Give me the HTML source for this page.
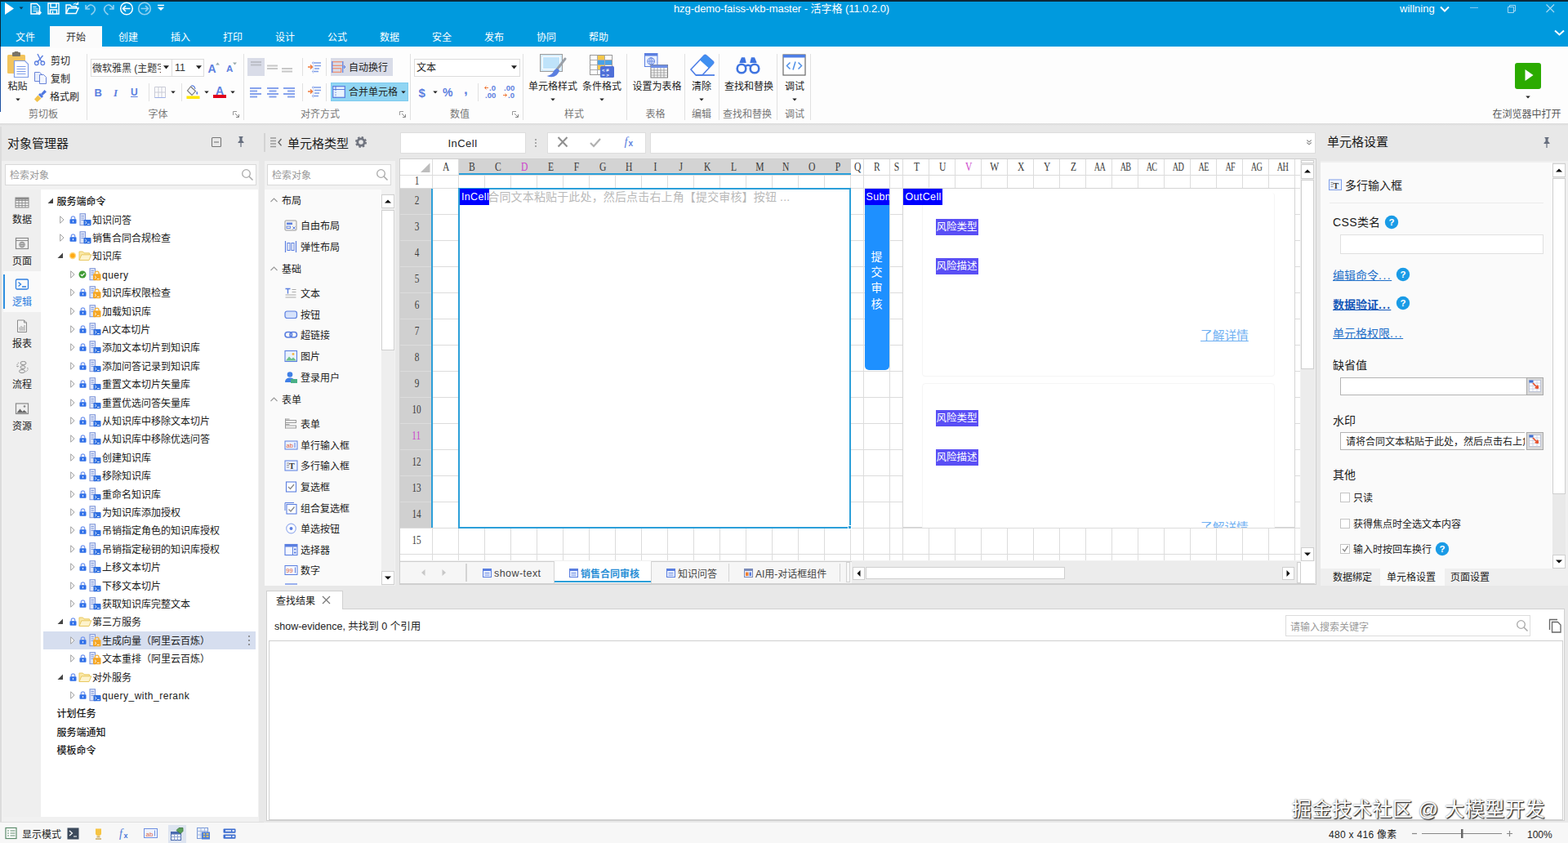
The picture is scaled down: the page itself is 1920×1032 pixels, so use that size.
<!DOCTYPE html><html lang="zh-CN"><head><meta charset="utf-8"><title>活字格</title><style>
*{box-sizing:border-box;margin:0;padding:0}
html,body{width:1920px;height:1032px;overflow:hidden;background:#e8e8e8}
body{font-family:"Liberation Sans","Noto Sans CJK SC",sans-serif;font-size:12px;color:#222;position:relative}
.a{position:absolute}
.t{position:absolute;white-space:nowrap;line-height:1}
.w{color:#fff}
svg{position:absolute;overflow:visible}
.hdr{font-size:15px;color:#1a1a1a}
.grp{font-size:12px;color:#777}
.rb{font-size:12px;color:#222}
.col{position:absolute;top:195px;height:19px;font-family:"Liberation Serif","Noto Serif CJK SC",serif;font-size:14.5px;color:#333;text-align:center;line-height:19px}
.row{position:absolute;left:490px;width:40px;font-family:"Liberation Serif","Noto Serif CJK SC",serif;font-size:14px;color:#333;text-align:center}
.nw{display:inline-block;transform:scaleX(.8)}
.nw2{display:inline-block;transform:scaleX(.7);letter-spacing:-1px}
.tr{position:absolute;left:52px;width:261px;height:22px}
.lk{color:#1b6fc2;text-decoration:underline}
</style></head><body>
<div class="a" style="left:0px;top:0px;width:1920px;height:57px;background:#009ade;"></div>
<div class="a" style="left:0px;top:0px;width:1920px;height:1.5px;background:#0c2838;"></div>
<div class="a" style="left:0px;top:0px;width:1px;height:57px;background:#0c2838;"></div>
<svg style="left:0px;top:0px" width="210" height="24" viewBox="0 0 210 24">
    <path d="M6 3 L17 10.5 L6 18 Z" fill="#fff"/>
    <path d="M23.5 8.5 h5 l-2.5 3 z" fill="#0a3a5a"/>
    <path d="M38 4.5 h7 l3.5 3.5 v9 h-10.5 z" stroke="#fff" fill="none" stroke-width="1.5"/><path d="M40.5 8.5h4M40.5 11h6M40.5 13.5h6" stroke="#fff" stroke-width="1.2"/><path d="M44 15.5h6M47.5 13l2.5 2.500l-2.500 2.500" stroke="#fff" fill="none" stroke-width="1.5"/>
    <path d="M59 4 h13 v13 h-13 z" stroke="#fff" fill="none" stroke-width="1.5"/><path d="M62 4 v5 h7 v-5 M61.500 17 v-5 h8 v5 M64.500 13.500v3" stroke="#fff" fill="none" stroke-width="1.5"/>
    <path d="M81 16.500 v-10.500 h5 l1.500 2 h6 v2" stroke="#fff" fill="none" stroke-width="1.5"/><path d="M81 16.500 l3 -6.500 h12 l-3 6.500 z" stroke="#fff" fill="none" stroke-width="1.5"/><path d="M90 5.500 q3 -3 5.500 0 M95.500 2.500 v3 h-3" stroke="#fff" fill="none" stroke-width="1.200"/>
    <path d="M105 6 l0 5 l5 0 M105.500 10.500 q5 -8 10 -2 q3 5 -4 9.500" stroke="#8fd0f0" fill="none" stroke-width="1.6"/>
    <path d="M139 6 l0 5 l-5 0 M138.500 10.500 q-5 -8 -10 -2 q-3 5 4 9.500" stroke="#8fd0f0" fill="none" stroke-width="1.6"/>
    <circle cx="155" cy="10.500" r="7.300" stroke="#fff" fill="none" stroke-width="1.5"/><path d="M159.500 10.500 h-9 M154 7 l-3.500 3.500 l3.500 3.500" stroke="#fff" fill="none" stroke-width="1.5"/>
    <circle cx="177" cy="10.500" r="7.300" stroke="#8fd0f0" fill="none" stroke-width="1.6"/><path d="M172.500 10.500 h9 M178 7 l3.500 3.500 l-3.500 3.500" stroke="#8fd0f0" fill="none" stroke-width="1.6"/>
    <path d="M193 6.500 h8" stroke="#fff" stroke-width="1.500"/><path d="M193 9 h8 l-4 4 z" fill="#fff"/>
    </svg>
<div class="t " style="left:757px;width:400px;text-align:center;top:3.0px;font-size:13px;height:15px;line-height:15px;color:#fff;letter-spacing:-0.05px">hzg-demo-faiss-vkb-master - 活字格 (11.0.2.0)</div>
<div class="t " style="left:1714px;top:3.0px;font-size:13px;height:15px;line-height:15px;color:#fff;">willning</div>
<svg style="left:1760px;top:0px" width="160" height="56" viewBox="0 0 160 56">
    <path d="M4 8.500 l5 5 l5 -5" stroke="#fff" stroke-width="2" fill="none"/>
    <path d="M40 9.500 h10" stroke="#7fc8ee" stroke-width="1"/>
    <path d="M86.500 8.500 h7 v7 h-7 z M88.500 8.500 v-2 h7 v7 h-2" stroke="#a6daf3" stroke-width="1" fill="none"/>
    <path d="M133.500 5.500 l9.500 9.500 M143 5.500 l-9.500 9.500" stroke="#a6daf3" stroke-width="1.200" fill="none"/>
    <path d="M144 37.500 l5.500 5 l5.500 -5" stroke="#fff" stroke-width="2" fill="none"/>
    </svg>
<div class="a" style="left:61px;top:32px;width:64px;height:26px;background:#fbfbfb;"></div>
<div class="t " style="left:-169px;width:400px;text-align:center;top:39.0px;font-size:12px;height:14px;line-height:14px;color:#fff;">文件</div>
<div class="t " style="left:-107px;width:400px;text-align:center;top:39.0px;font-size:12px;height:14px;line-height:14px;color:#333;">开始</div>
<div class="t " style="left:-43px;width:400px;text-align:center;top:39.0px;font-size:12px;height:14px;line-height:14px;color:#fff;">创建</div>
<div class="t " style="left:21px;width:400px;text-align:center;top:39.0px;font-size:12px;height:14px;line-height:14px;color:#fff;">插入</div>
<div class="t " style="left:85px;width:400px;text-align:center;top:39.0px;font-size:12px;height:14px;line-height:14px;color:#fff;">打印</div>
<div class="t " style="left:149px;width:400px;text-align:center;top:39.0px;font-size:12px;height:14px;line-height:14px;color:#fff;">设计</div>
<div class="t " style="left:213px;width:400px;text-align:center;top:39.0px;font-size:12px;height:14px;line-height:14px;color:#fff;">公式</div>
<div class="t " style="left:277px;width:400px;text-align:center;top:39.0px;font-size:12px;height:14px;line-height:14px;color:#fff;">数据</div>
<div class="t " style="left:341px;width:400px;text-align:center;top:39.0px;font-size:12px;height:14px;line-height:14px;color:#fff;">安全</div>
<div class="t " style="left:405px;width:400px;text-align:center;top:39.0px;font-size:12px;height:14px;line-height:14px;color:#fff;">发布</div>
<div class="t " style="left:469px;width:400px;text-align:center;top:39.0px;font-size:12px;height:14px;line-height:14px;color:#fff;">协同</div>
<div class="t " style="left:533px;width:400px;text-align:center;top:39.0px;font-size:12px;height:14px;line-height:14px;color:#fff;">帮助</div>
<div class="a" style="left:0px;top:57px;width:1920px;height:94px;background:#fdfdfd;"></div>
<div class="a" style="left:61px;top:57px;width:64px;height:2px;background:#fbfbfb;"></div>
<div class="a" style="left:0px;top:151px;width:1920px;height:3px;background:linear-gradient(#d9d9d9,#e8e8e8)"></div>
<div class="a" style="left:0px;top:57px;width:1px;height:80px;background:#1b4fa0;"></div>
<svg style="left:8px;top:63px" width="30" height="34" viewBox="0 0 30 34">
      <rect x="1" y="4" width="22" height="23" rx="1.500" fill="#f2c45c"/>
      <rect x="7" y="1" width="10" height="5" rx="1" fill="#7a7466"/><rect x="9.500" y="0" width="5" height="3" rx="1" fill="#7a7466"/>
      <path d="M9.500 11.500 h13 l4 4 v16 h-17 z" fill="#fff" stroke="#7f9ee8" stroke-width="1.200"/>
      <path d="M12.500 18.500h11M12.500 21.500h11M12.500 24.500h11M12.500 27.500h11" stroke="#7f9ee8" stroke-width="1.200"/></svg>
<div class="t " style="left:-178.5px;width:400px;text-align:center;top:99.0px;font-size:12px;height:14px;line-height:14px;color:#222;">粘贴</div>
<svg style="left:18.5px;top:119.5px" width="6" height="4" viewBox="0 0 6 4"><path d="M0.300 0.500 h5.400 l-2.700 3 z" fill="#222"/></svg>
<svg style="left:41px;top:65px" width="16" height="16" viewBox="0 0 16 16"><path d="M5 1 l5 10 M11.500 3 l-7 8.500" stroke="#5b7fe0" stroke-width="1.400" fill="none"/><circle cx="3.800" cy="12.300" r="2.300" stroke="#5b7fe0" stroke-width="1.300" fill="none"/><circle cx="11.300" cy="12.300" r="2.300" stroke="#5b7fe0" stroke-width="1.300" fill="none"/></svg>
<div class="t " style="left:62px;top:68.0px;font-size:12px;height:14px;line-height:14px;">剪切</div>
<svg style="left:41px;top:87px" width="17" height="17" viewBox="0 0 17 17"><path d="M1.500 1.500 h6 l2.500 2.500 v8.500 h-8.500 z" fill="#e8eefc" stroke="#6a85d8"/><path d="M7.500 4.500 h5 l3 3 v8 h-8 z" fill="#f3f6fe" stroke="#6a85d8"/></svg>
<div class="t " style="left:62px;top:90.0px;font-size:12px;height:14px;line-height:14px;">复制</div>
<svg style="left:41px;top:109px" width="17" height="17" viewBox="0 0 17 17"><path d="M9 6 l4.500 -5 l2.500 2.500 l-5 4.500 z" fill="#4f77e0"/><path d="M8 5 l4 4 l-2 2 l-4 -4 z" fill="#4f77e0"/><path d="M5.500 7.500 l4 4 l-5 4.500 l-3.500 -3.500 z" fill="#f2c24a"/></svg>
<div class="t " style="left:61px;top:112.0px;font-size:12px;height:14px;line-height:14px;">格式刷</div>
<div class="t " style="left:-147px;width:400px;text-align:center;top:132.5px;font-size:12px;height:14px;line-height:14px;color:#777;">剪切板</div>
<div class="a" style="left:106px;top:66px;width:1px;height:81px;background:#e1e1e1;"></div>
<div class="a" style="left:111px;top:71.5px;width:100px;height:22px;background:#fff;border:1px solid #dcdcdc;"></div>
<div class="a" style="left:210px;top:71.5px;width:40px;height:22px;background:#fff;border:1px solid #dcdcdc;"></div>
<div class="a" style="left:113px;top:74px;width:84px;height:18px;overflow:hidden"><div class="t " style="left:0px;top:3.0px;font-size:12px;height:14px;line-height:14px;color:#333;">微软雅黑 (主题字体)</div></div>
<svg style="left:200.0px;top:79.8px" width="7" height="4.5" viewBox="0 0 7 4.5"><path d="M0 0.200 h7 l-3.500 4.300 z" fill="#222"/></svg>
<div class="t " style="left:214px;top:75.8px;font-size:12.5px;height:14.5px;line-height:14.5px;color:#333;">11</div>
<svg style="left:239.5px;top:79.8px" width="7" height="4.5" viewBox="0 0 7 4.5"><path d="M0 0.200 h7 l-3.500 4.300 z" fill="#222"/></svg>
<div class="t " style="left:254.5px;top:76.0px;font-size:14px;height:16px;line-height:16px;color:#5b7fe0;font-weight:bold">A</div>
<svg style="left:264px;top:76px" width="5" height="4" viewBox="0 0 5 4"><path d="M0 3.500 l2.500 -3 l2.500 3 z" fill="#9aa"/></svg>
<div class="t " style="left:277px;top:78.2px;font-size:11.5px;height:13.5px;line-height:13.5px;color:#5b7fe0;font-weight:bold">A</div>
<svg style="left:285px;top:76px" width="5" height="4" viewBox="0 0 5 4"><path d="M0 0.500 l2.500 3 l2.500 -3 z" fill="#9aa"/></svg>
<div class="t " style="left:115.5px;top:105.5px;font-size:13px;height:15px;line-height:15px;color:#5b7fe0;font-weight:bold">B</div>
<div class="t " style="left:139px;top:105.5px;font-size:13px;height:15px;line-height:15px;color:#5b7fe0;font-weight:bold;font-style:italic;font-family:'Liberation Serif',serif">I</div>
<div class="t " style="left:160px;top:105.5px;font-size:12px;height:14px;line-height:14px;color:#5b7fe0;font-weight:bold;text-decoration:underline">U</div>
<div class="a" style="left:182px;top:102px;width:1px;height:22px;background:#e1e1e1;"></div>
<svg style="left:189px;top:106px" width="14" height="14" viewBox="0 0 14 14"><path d="M0.500 0.500 h13 v13 h-13 z M5 0.500 v13 M9 0.500 v13 M0.500 7 h13" stroke="#c9cbd6" fill="none"/><path d="M0.500 13.500 h13" stroke="#9db0ea"/></svg>
<svg style="left:209px;top:110.5px" width="6" height="4" viewBox="0 0 6 4"><path d="M0.300 0.500 h5.400 l-2.700 3 z" fill="#222"/></svg>
<div class="a" style="left:222px;top:102px;width:1px;height:22px;background:#e1e1e1;"></div>
<svg style="left:228px;top:104px" width="18" height="18" viewBox="0 0 18 18"><path d="M5.500 2 l6 5.500 l-4.500 5 l-5.500 -5.500 z" fill="#f4f6fb" stroke="#777" stroke-width="1.100"/><path d="M6 1 q4 -1 5 4" stroke="#5b7fe0" fill="none" stroke-width="1.200"/><path d="M13 7.500 q2.500 3 0 4.500 q-1.500 -2 0 -4.500z" fill="#5b7fe0"/><rect x="0.500" y="13.500" width="16" height="3.500" fill="#ffe600"/></svg>
<svg style="left:250px;top:110.5px" width="6" height="4" viewBox="0 0 6 4"><path d="M0.300 0.500 h5.400 l-2.700 3 z" fill="#222"/></svg>
<div class="t " style="left:264px;top:103.0px;font-size:14px;height:16px;line-height:16px;color:#5b7fe0;font-weight:bold">A</div>
<div class="a" style="left:261px;top:116px;width:16px;height:4px;background:#e0001b;"></div>
<svg style="left:282px;top:110.5px" width="6" height="4" viewBox="0 0 6 4"><path d="M0.300 0.500 h5.400 l-2.700 3 z" fill="#222"/></svg>
<div class="t " style="left:-6.5px;width:400px;text-align:center;top:132.5px;font-size:12px;height:14px;line-height:14px;color:#777;">字体</div>
<svg style="left:285px;top:135.5px" width="8" height="8" viewBox="0 0 8 8"><path d="M0.500 5 v-4.500 h4.500" stroke="#999" fill="none"/><path d="M3 3 l4 4 M7.500 4 v3.500 h-3.500" stroke="#888" fill="none"/></svg>
<div class="a" style="left:298px;top:66px;width:1px;height:81px;background:#e1e1e1;"></div>
<div class="a" style="left:303px;top:71px;width:21px;height:22px;background:#d9dce8;"></div>
<svg style="left:303px;top:71px" width="60" height="22" viewBox="0 0 60 22"><path d="M4 5 h13 M4 8.500 h13" stroke="#bbbdc6" stroke-width="2"/><path d="M24 9.500 h13 M24 13 h13" stroke="#c8c8c8" stroke-width="2"/><path d="M42 13 h13 M42 16.500 h13" stroke="#c8c8c8" stroke-width="2"/></svg>
<svg style="left:305px;top:106px" width="60" height="16" viewBox="0 0 60 16"><path d="M1 2 h14 M1 5.500 h9 M1 9 h14 M1 12.500 h9" stroke="#86a2ec" stroke-width="2.100"/><path d="M22 2 h14 M24.500 5.500 h9 M22 9 h14 M24.500 12.500 h9" stroke="#86a2ec" stroke-width="2.100"/><path d="M42 2 h14 M47 5.500 h9 M42 9 h14 M47 12.500 h9" stroke="#86a2ec" stroke-width="2.100"/></svg>
<div class="a" style="left:370px;top:71px;width:1px;height:22px;background:#e1e1e1;"></div>
<div class="a" style="left:370px;top:102px;width:1px;height:22px;background:#e1e1e1;"></div>
<div class="a" style="left:399px;top:71px;width:1px;height:22px;background:#e1e1e1;"></div>
<div class="a" style="left:399px;top:102px;width:1px;height:22px;background:#e1e1e1;"></div>
<svg style="left:377px;top:75px" width="17" height="15" viewBox="0 0 17 15"><path d="M5 2 h11 M8 5.500 h8 M8 9 h6 M5 12.500 h8" stroke="#7f9ee8" stroke-width="1.700"/><path d="M0 7 h5 M3 4.500 l2.500 2.500 l-2.500 2.500" stroke="#f07a3a" stroke-width="1.400" fill="none"/><path d="M6.500 0 v15" stroke="#cdd6f5" stroke-width="1"/></svg>
<svg style="left:377px;top:105px" width="17" height="15" viewBox="0 0 17 15"><path d="M5 2 h11 M8 5.500 h8 M8 9 h6 M5 12.500 h8" stroke="#7f9ee8" stroke-width="1.700"/><path d="M0 7 h5 M3 4.500 l2.500 2.500 l-2.500 2.500" stroke="#f07a3a" stroke-width="1.400" fill="none"/><path d="M6.500 0 v15" stroke="#cdd6f5" stroke-width="1"/></svg>
<div class="a" style="left:405px;top:71px;width:76px;height:22px;background:#d9dce8;"></div>
<svg style="left:406px;top:75px" width="17" height="15" viewBox="0 0 17 15"><rect x="0.700" y="0.700" width="13" height="4.600" fill="none" stroke="#f08a6a" stroke-width="1.200"/><rect x="0.700" y="8.700" width="11" height="4.600" fill="none" stroke="#f08a6a" stroke-width="1.200"/><path d="M0.700 0 v14 M13.700 0 v14" stroke="#6f8fe6" stroke-width="1.400"/><path d="M13.500 7 h3 M15 5 l2 2 l-2 2" stroke="#5b7fe0" fill="none"/></svg>
<div class="t " style="left:427px;top:76.0px;font-size:12px;height:14px;line-height:14px;color:#222;">自动换行</div>
<div class="a" style="left:405px;top:101px;width:95px;height:23px;background:#90d5f3;border:1px solid #7ecbee;"></div>
<svg style="left:407px;top:105px" width="16" height="15" viewBox="0 0 16 15"><rect x="0.700" y="0.700" width="14.600" height="13.600" fill="#eaf4fd" stroke="#5b7fe0" stroke-width="1.300"/><path d="M0.700 4.500 h14.600 M4 0.700 v3.800" stroke="#5b7fe0" stroke-width="1.100"/><path d="M4 4.500 v10" stroke="#5b7fe0" stroke-width="1" stroke-dasharray="1.500 1.500"/></svg>
<div class="t " style="left:427px;top:105.5px;font-size:12px;height:14px;line-height:14px;color:#222;">合并单元格</div>
<svg style="left:491px;top:110.5px" width="6" height="4" viewBox="0 0 6 4"><path d="M0.300 0.500 h5.400 l-2.700 3 z" fill="#222"/></svg>
<div class="t " style="left:192px;width:400px;text-align:center;top:132.5px;font-size:12px;height:14px;line-height:14px;color:#777;">对齐方式</div>
<svg style="left:489px;top:135.5px" width="8" height="8" viewBox="0 0 8 8"><path d="M0.500 5 v-4.500 h4.500" stroke="#999" fill="none"/><path d="M3 3 l4 4 M7.500 4 v3.500 h-3.500" stroke="#888" fill="none"/></svg>
<div class="a" style="left:502px;top:66px;width:1px;height:81px;background:#e1e1e1;"></div>
<div class="a" style="left:507px;top:71.5px;width:130px;height:22px;background:#fff;border:1px solid #dcdcdc;"></div>
<div class="t " style="left:510px;top:76.0px;font-size:12px;height:14px;line-height:14px;color:#222;">文本</div>
<svg style="left:625.5px;top:79.8px" width="7" height="4.5" viewBox="0 0 7 4.5"><path d="M0 0.200 h7 l-3.500 4.300 z" fill="#222"/></svg>
<div class="t " style="left:512.5px;top:104.5px;font-size:15px;height:17px;line-height:17px;color:#5b7fe0;font-weight:bold">$</div>
<svg style="left:530px;top:110.5px" width="6" height="4" viewBox="0 0 6 4"><path d="M0.300 0.500 h5.400 l-2.700 3 z" fill="#222"/></svg>
<div class="t " style="left:542px;top:105.0px;font-size:14px;height:16px;line-height:16px;color:#5b7fe0;font-weight:bold">%</div>
<div class="t " style="left:568px;top:99.5px;font-size:17px;height:19px;line-height:19px;color:#5b7fe0;font-weight:bold">,</div>
<div class="a" style="left:585px;top:102px;width:1px;height:22px;background:#e1e1e1;"></div>
<svg style="left:593px;top:103px" width="40" height="20" viewBox="0 0 40 20"><text x="6" y="8" font-size="9.500" font-weight="bold" fill="#5b7fe0" font-family="Liberation Sans,sans-serif">.0</text><text x="1" y="17" font-size="9.500" font-weight="bold" fill="#5b7fe0" font-family="Liberation Sans,sans-serif">.00</text><path d="M5 4.500 h-4.500 M2.500 2.500 l-2 2 l2 2" stroke="#f07a3a" fill="none"/><text x="24" y="8" font-size="9.500" font-weight="bold" fill="#5b7fe0" font-family="Liberation Sans,sans-serif">.00</text><text x="29" y="17" font-size="9.500" font-weight="bold" fill="#5b7fe0" font-family="Liberation Sans,sans-serif">.0</text><path d="M23 13.500 h4.500 M25.500 11.500 l2 2 l-2 2" stroke="#f07a3a" fill="none"/></svg>
<div class="t " style="left:363px;width:400px;text-align:center;top:132.5px;font-size:12px;height:14px;line-height:14px;color:#777;">数值</div>
<svg style="left:627px;top:135.5px" width="8" height="8" viewBox="0 0 8 8"><path d="M0.500 5 v-4.500 h4.500" stroke="#999" fill="none"/><path d="M3 3 l4 4 M7.500 4 v3.500 h-3.500" stroke="#888" fill="none"/></svg>
<div class="a" style="left:640px;top:66px;width:1px;height:81px;background:#e1e1e1;"></div>
<svg style="left:659px;top:64px" width="38" height="36" viewBox="0 0 38 36"><rect x="2.500" y="2.500" width="27" height="21" fill="#d6ecfb" stroke="#9c9c9c" stroke-width="1"/><rect x="5.500" y="5.500" width="21" height="15" fill="#bfe3fa" stroke="#fff"/><path d="M33 8 l-10 13" stroke="#9aa0a8" stroke-width="3" stroke-linecap="round"/><path d="M23.500 20 q-3 0 -5 4 q-2 4 -8 5 q7 3 12 -1 q3 -3 3.500 -6 z" fill="#5b7fe0"/></svg>
<div class="t " style="left:477px;width:400px;text-align:center;top:99.0px;font-size:12px;height:14px;line-height:14px;color:#222;">单元格样式</div>
<svg style="left:674px;top:119.5px" width="6" height="4" viewBox="0 0 6 4"><path d="M0.300 0.500 h5.400 l-2.700 3 z" fill="#222"/></svg>
<svg style="left:720px;top:65px" width="34" height="34" viewBox="0 0 34 34"><rect x="2.500" y="2.500" width="27" height="24" fill="#fff" stroke="#999"/><path d="M2.500 8.500 h27 M2.500 14.500 h27 M2.500 20.500 h27 M11.500 2.500 v24 M20.500 2.500 v24" stroke="#aaa"/><rect x="12" y="3" width="8" height="5" fill="#f5c84a"/><rect x="12" y="9" width="8" height="5" fill="#4aa3e8"/><rect x="21" y="9" width="8" height="5" fill="#4aa3e8"/><rect x="12" y="15" width="8" height="5" fill="#f5c84a"/><rect x="15" y="16" width="17" height="14" rx="1.500" fill="#4f6fd8"/><text x="17" y="22.500" font-size="6" font-weight="bold" fill="#fff" font-family="Liberation Sans,sans-serif">&lt; ≠</text><text x="17" y="28.500" font-size="6" font-weight="bold" fill="#fff" font-family="Liberation Sans,sans-serif">= &gt;</text></svg>
<div class="t " style="left:537px;width:400px;text-align:center;top:99.0px;font-size:12px;height:14px;line-height:14px;color:#222;">条件格式</div>
<svg style="left:734px;top:119.5px" width="6" height="4" viewBox="0 0 6 4"><path d="M0.300 0.500 h5.400 l-2.700 3 z" fill="#222"/></svg>
<div class="t " style="left:503px;width:400px;text-align:center;top:132.5px;font-size:12px;height:14px;line-height:14px;color:#777;">样式</div>
<div class="a" style="left:767px;top:66px;width:1px;height:81px;background:#e1e1e1;"></div>
<svg style="left:787px;top:64px" width="34" height="34" viewBox="0 0 34 34"><rect x="2.500" y="1.500" width="15.500" height="16" fill="#eaf1ff" stroke="#5b7fe0"/><rect x="2.500" y="1.500" width="15.500" height="3" fill="#5b7fe0"/><circle cx="10.200" cy="11" r="4.300" fill="none" stroke="#5b7fe0"/><path d="M6 11 h8.500 M10.200 6.700 v8.600" stroke="#5b7fe0" stroke-width="0.800"/><ellipse cx="10.200" cy="11" rx="2" ry="4.300" fill="none" stroke="#5b7fe0" stroke-width="0.700"/><rect x="10" y="15.500" width="20.500" height="15.500" fill="#fff" stroke="#7a7a7a"/><rect x="10" y="15.500" width="20.500" height="3.500" fill="#6f8fe6"/><path d="M10 22 h20.500 M10 25 h20.500 M10 28 h20.500 M14 19 v12 M18 19 v12 M22 19 v12 M26 19 v12" stroke="#9a9a9a" stroke-width="0.900"/></svg>
<div class="t " style="left:604.5px;width:400px;text-align:center;top:99.0px;font-size:12px;height:14px;line-height:14px;color:#222;">设置为表格</div>
<div class="t " style="left:602.5px;width:400px;text-align:center;top:132.5px;font-size:12px;height:14px;line-height:14px;color:#777;">表格</div>
<div class="a" style="left:838px;top:66px;width:1px;height:81px;background:#e1e1e1;"></div>
<svg style="left:843px;top:65px" width="34" height="30" viewBox="0 0 34 30"><path d="M3 20 l16 -17 q1.500 -1.500 3 0 l8 7 q1.500 1.500 0 3 l-13 14 h-8 z" fill="#fff" stroke="#4f7fe6" stroke-width="1.600"/><path d="M14 8.500 l5 -5.500 q1.500 -1.500 3 0 l8 7 q1.500 1.500 0 3 l-5 5.500 z" fill="#3f8ff0"/><path d="M9 27 h23" stroke="#4f7fe6" stroke-width="1.800"/></svg>
<div class="t " style="left:659px;width:400px;text-align:center;top:99.0px;font-size:12px;height:14px;line-height:14px;color:#222;">清除</div>
<svg style="left:856px;top:119.5px" width="6" height="4" viewBox="0 0 6 4"><path d="M0.300 0.500 h5.400 l-2.700 3 z" fill="#222"/></svg>
<div class="t " style="left:659px;width:400px;text-align:center;top:132.5px;font-size:12px;height:14px;line-height:14px;color:#777;">编辑</div>
<div class="a" style="left:880px;top:66px;width:1px;height:81px;background:#e1e1e1;"></div>
<svg style="left:901px;top:68px" width="30" height="24" viewBox="0 0 30 24"><circle cx="7" cy="16" r="5.300" fill="#fff" stroke="#3f74e0" stroke-width="2.600"/><circle cx="23" cy="16" r="5.300" fill="#fff" stroke="#3f74e0" stroke-width="2.600"/><path d="M5 9 l2.500 -6 h3 l1.500 6 M25 9 l-2.500 -6 h-3 l-1.500 6" fill="#3f74e0" stroke="#3f74e0" stroke-width="1.500"/><path d="M12 13 q3 -2.500 6 0" stroke="#3f74e0" stroke-width="2.400" fill="none"/></svg>
<div class="t " style="left:717px;width:400px;text-align:center;top:99.0px;font-size:12px;height:14px;line-height:14px;color:#222;">查找和替换</div>
<div class="t " style="left:715px;width:400px;text-align:center;top:132.5px;font-size:12px;height:14px;line-height:14px;color:#777;">查找和替换</div>
<div class="a" style="left:951px;top:66px;width:1px;height:81px;background:#e1e1e1;"></div>
<svg style="left:958px;top:66px" width="30" height="28" viewBox="0 0 30 28"><rect x="1" y="1" width="27" height="25" fill="#fff" stroke="#6a6a6a" stroke-width="1.200"/><rect x="1" y="1" width="27" height="3.500" fill="#4f7fe6"/><path d="M9.500 10.500 l-4 4 l4 4 M19.500 10.500 l4 4 l-4 4 M16 9.500 l-3 10" stroke="#4f8fe6" stroke-width="1.500" fill="none"/></svg>
<div class="t " style="left:773px;width:400px;text-align:center;top:99.0px;font-size:12px;height:14px;line-height:14px;color:#222;">调试</div>
<svg style="left:970px;top:119.5px" width="6" height="4" viewBox="0 0 6 4"><path d="M0.300 0.500 h5.400 l-2.700 3 z" fill="#222"/></svg>
<div class="t " style="left:773px;width:400px;text-align:center;top:132.5px;font-size:12px;height:14px;line-height:14px;color:#777;">调试</div>
<div class="a" style="left:992px;top:66px;width:1px;height:81px;background:#e1e1e1;"></div>
<div class="a" style="left:1855px;top:76.5px;width:32px;height:32px;background:#2bab00;border-radius:3px"></div>
<svg style="left:1855px;top:76px" width="32" height="32" viewBox="0 0 32 32"><path d="M12.500 9 l10 7 l-10 7 z" fill="#fff"/></svg>
<svg style="left:1868px;top:117px" width="6" height="4" viewBox="0 0 6 4"><path d="M0.300 0.500 h5.400 l-2.700 3 z" fill="#222"/></svg>
<div class="t " style="left:1669.5px;width:400px;text-align:center;top:132.5px;font-size:12px;height:14px;line-height:14px;color:#555;">在浏览器中打开</div>
<div class="a" style="left:0px;top:197px;width:317px;height:810px;background:#f1f1f1;"></div>
<div class="a" style="left:0px;top:155px;width:2px;height:852px;background:#dcdcdc;"></div>
<div class="t " style="left:9px;top:167.0px;font-size:15px;height:17px;line-height:17px;color:#1a1a1a;">对象管理器</div>
<svg style="left:258px;top:167px" width="14" height="14" viewBox="0 0 14 14"><rect x="1.500" y="1.500" width="11" height="11" rx="1" fill="none" stroke="#777" stroke-width="1.100"/><path d="M4 7 h6" stroke="#777" stroke-width="1.100"/></svg>
<svg style="left:290px;top:166px" width="10" height="15" viewBox="0 0 10 15"><path d="M2.500 1 h5 v1 l-1 0.800 v3.200 l2 2 v1 h-7 v-1 l2 -2 v-3.200 l-1 -0.800 z" fill="#666e7e"/><path d="M5 9 v5" stroke="#666e7e" stroke-width="1.200"/></svg>
<div class="a" style="left:323px;top:163px;width:2px;height:23px;background:#d4d4d4;"></div>
<div class="a" style="left:6px;top:201px;width:308px;height:26px;background:#fff;border:1px solid #d9d9d9;"></div>
<div class="t " style="left:12px;top:208.0px;font-size:12px;height:14px;line-height:14px;color:#9a9a9a;">检索对象</div>
<svg style="left:295px;top:206px" width="16" height="16" viewBox="0 0 16 16"><circle cx="6.500" cy="6.500" r="4.800" fill="none" stroke="#aaa" stroke-width="1.300"/><path d="M10 10 l4.500 4.500" stroke="#aaa" stroke-width="1.600"/></svg>
<div class="a" style="left:4px;top:232px;width:46px;height:768px;background:#efefef;"></div>
<div class="a" style="left:4px;top:332px;width:46px;height:50px;background:#fafafa;"></div>
<div class="a" style="left:4px;top:336px;width:2px;height:42px;background:#2f8fe0;"></div>
<div class="a" style="left:50px;top:232px;width:266px;height:768px;background:#fff;"></div>
<svg style="left:18px;top:240px" width="18" height="16" viewBox="0 0 18 16"><rect x="1" y="2" width="16" height="12" fill="none" stroke="#8a8a8a"/><path d="M1 5.500h16M1 8.500h16M1 11.500h16M5 2v12M9 2v12M13 2v12" stroke="#8a8a8a" stroke-width="0.900"/><rect x="1" y="2" width="16" height="2.500" fill="#8a8a8a"/></svg>
<div class="t " style="left:-173px;width:400px;text-align:center;top:262.0px;font-size:12px;height:14px;line-height:14px;color:#222;">数据</div>
<svg style="left:18px;top:290px" width="18" height="16" viewBox="0 0 18 16"><rect x="1.500" y="1.500" width="15" height="13" fill="none" stroke="#8a8a8a" stroke-width="1.200"/><path d="M1.500 4.500h15" stroke="#8a8a8a"/><circle cx="9" cy="9.500" r="3.300" fill="none" stroke="#8a8a8a"/><path d="M5.700 9.500h6.600M9 6.200v6.600" stroke="#8a8a8a" stroke-width="0.800"/><ellipse cx="9" cy="9.500" rx="1.500" ry="3.300" fill="none" stroke="#8a8a8a" stroke-width="0.800"/></svg>
<div class="t " style="left:-173px;width:400px;text-align:center;top:312.5px;font-size:12px;height:14px;line-height:14px;color:#222;">页面</div>
<svg style="left:18px;top:340px" width="18" height="16" viewBox="0 0 18 16"><rect x="1.500" y="2" width="15" height="12" rx="1.500" fill="none" stroke="#2f7fe0" stroke-width="1.300"/><path d="M4.500 5.500 l3 2.500 l-3 2.500 M9 11 h5" stroke="#2f7fe0" stroke-width="1.300" fill="none"/></svg>
<div class="t " style="left:-173px;width:400px;text-align:center;top:363.0px;font-size:12px;height:14px;line-height:14px;color:#2f7fe0;">逻辑</div>
<svg style="left:18px;top:391px" width="18" height="16" viewBox="0 0 18 16"><path d="M3.500 1 h8 l3 3 v11.500 h-11 z" fill="#f3f3f3" stroke="#8a8a8a"/><path d="M11.500 1 v3 h3" fill="none" stroke="#8a8a8a"/><path d="M6 12 v-2.500 M8 12 v-4 M10 12 v-3 M12 12 v-5" stroke="#aaa" stroke-width="1.200"/><path d="M5.500 13 h7.500" stroke="#999"/></svg>
<div class="t " style="left:-173px;width:400px;text-align:center;top:413.5px;font-size:12px;height:14px;line-height:14px;color:#222;">报表</div>
<svg style="left:18px;top:441px" width="18" height="16" viewBox="0 0 18 16"><ellipse cx="10.500" cy="3.500" rx="3.500" ry="2" fill="none" stroke="#8a8a8a"/><ellipse cx="10" cy="8.500" rx="3" ry="1.800" fill="none" stroke="#8a8a8a"/><ellipse cx="9" cy="13.500" rx="3.500" ry="2" fill="none" stroke="#8a8a8a"/><path d="M5 3 q-3 1.500 -1.500 5 M3.500 8 l-1.500 -1.500 M3.500 8 l1.500 -1 M15.500 9 q2 3 -2 5" stroke="#8a8a8a" fill="none" stroke-dasharray="1.500 1"/></svg>
<div class="t " style="left:-173px;width:400px;text-align:center;top:464.0px;font-size:12px;height:14px;line-height:14px;color:#222;">流程</div>
<svg style="left:18px;top:492px" width="18" height="16" viewBox="0 0 18 16"><rect x="1.500" y="2" width="15" height="12.500" fill="none" stroke="#8a8a8a" stroke-width="1.200"/><path d="M2.500 13.500 l4 -5 l3 3.500 l2 -2 l4 3.500 z" fill="#666"/><circle cx="12" cy="5.500" r="1.300" fill="#888"/></svg>
<div class="t " style="left:-173px;width:400px;text-align:center;top:514.5px;font-size:12px;height:14px;line-height:14px;color:#222;">资源</div>
<svg style="left:58px;top:242.0px" width="8" height="8" viewBox="0 0 8 8"><path d="M7 0.500 v6.500 h-6.500 z" fill="#444"/></svg>
<div class="t " style="left:69.5px;top:240.0px;font-size:12px;height:14px;line-height:14px;color:#1a1a1a;font-weight:500">服务端命令</div>
<svg style="left:73px;top:263.5px" width="6" height="10" viewBox="0 0 6 10"><path d="M0.700 0.800 l4.300 4.200 l-4.300 4.200 z" fill="#fff" stroke="#a0a0a0" stroke-width="1"/></svg>
<svg style="left:85px;top:263.5px" width="9" height="10" viewBox="0 0 9 10"><path d="M2.300 4.500 v-1.500 a2.200 2.200 0 0 1 4.400 0 v1.500" stroke="#7a9cf0" stroke-width="1.300" fill="none"/><rect x="0.500" y="4.300" width="8" height="5.400" rx="0.800" fill="#2f6fe8"/><rect x="3.800" y="6" width="1.400" height="2.200" fill="#cfe0ff"/></svg>
<svg style="left:97px;top:260.5px" width="15" height="16" viewBox="0 0 15 16"><rect x="1" y="0.700" width="6.500" height="14" fill="#dfe6f8" stroke="#7c93d8" stroke-width="1"/><path d="M2.500 3.500h3.500M2.500 6h3.500M2.500 8.500h3.500" stroke="#7c93d8" stroke-width="0.900"/><rect x="5.500" y="8" width="9" height="7.300" rx="0.800" fill="#2f6fe0"/><path d="M7.300 10 l1.800 1.600 l-1.800 1.600 M10 13.500 h2.800" stroke="#fff" stroke-width="0.900" fill="none"/></svg>
<div class="t " style="left:113px;top:262.5px;font-size:12px;height:14px;line-height:14px;color:#1a1a1a;">知识问答</div>
<svg style="left:73px;top:286.0px" width="6" height="10" viewBox="0 0 6 10"><path d="M0.700 0.800 l4.300 4.200 l-4.300 4.200 z" fill="#fff" stroke="#a0a0a0" stroke-width="1"/></svg>
<svg style="left:85px;top:286.0px" width="9" height="10" viewBox="0 0 9 10"><path d="M2.300 4.500 v-1.500 a2.200 2.200 0 0 1 4.400 0 v1.500" stroke="#7a9cf0" stroke-width="1.300" fill="none"/><rect x="0.500" y="4.300" width="8" height="5.400" rx="0.800" fill="#2f6fe8"/><rect x="3.800" y="6" width="1.400" height="2.200" fill="#cfe0ff"/></svg>
<svg style="left:97px;top:283.0px" width="15" height="16" viewBox="0 0 15 16"><rect x="1" y="0.700" width="6.500" height="14" fill="#dfe6f8" stroke="#7c93d8" stroke-width="1"/><path d="M2.500 3.500h3.500M2.500 6h3.500M2.500 8.500h3.500" stroke="#7c93d8" stroke-width="0.900"/><rect x="5.500" y="8" width="9" height="7.300" rx="0.800" fill="#2f6fe0"/><path d="M7.300 10 l1.800 1.600 l-1.800 1.600 M10 13.500 h2.800" stroke="#fff" stroke-width="0.900" fill="none"/></svg>
<div class="t " style="left:113px;top:285.0px;font-size:12px;height:14px;line-height:14px;color:#1a1a1a;">销售合同合规检查</div>
<svg style="left:70px;top:309.0px" width="8" height="8" viewBox="0 0 8 8"><path d="M7 0.500 v6.500 h-6.500 z" fill="#444"/></svg>
<svg style="left:84px;top:308.0px" width="10" height="10" viewBox="0 0 10 10"><circle cx="5" cy="5" r="4.200" fill="#ffd980"/><circle cx="5" cy="5" r="2.800" fill="#ffa914"/></svg>
<svg style="left:96px;top:306.0px" width="17" height="14" viewBox="0 0 17 14"><path d="M1 12.500 v-10.500 h4.500 l1.500 1.800 h6.500 v2.200" fill="#fbe9a8" stroke="#e8c860" stroke-width="1"/><path d="M1 12.500 l2.800 -6.700 h12 l-2.800 6.700 z" fill="#fdf3cc" stroke="#e8c860" stroke-width="1"/></svg>
<div class="t " style="left:113px;top:307.0px;font-size:12px;height:14px;line-height:14px;color:#1a1a1a;">知识库</div>
<svg style="left:86px;top:330.5px" width="6" height="10" viewBox="0 0 6 10"><path d="M0.700 0.800 l4.300 4.200 l-4.300 4.200 z" fill="#fff" stroke="#a0a0a0" stroke-width="1"/></svg>
<svg style="left:96.0px;top:330.5px" width="10" height="10" viewBox="0 0 10 10"><circle cx="5" cy="5" r="4.500" fill="#3f9b35"/><path d="M2.800 5 l1.700 1.700 l3 -3.200" stroke="#fff" stroke-width="1.200" fill="none"/></svg>
<svg style="left:109px;top:327.5px" width="15" height="16" viewBox="0 0 15 16"><rect x="1" y="0.700" width="6.500" height="14" fill="#dfe6f8" stroke="#7c93d8" stroke-width="1"/><path d="M2.500 3.500h3.500M2.500 6h3.500M2.500 8.500h3.500" stroke="#7c93d8" stroke-width="0.900"/><path d="M7.300 8 v-1.300 a2.400 2.400 0 0 1 4.800 0 v1.300" stroke="#f6b84a" stroke-width="1.500" fill="none"/><rect x="5" y="7.300" width="9.500" height="8" rx="0.800" fill="#f5a623"/><path d="M7 9.800 l1.800 1.600 l-1.800 1.600 M9.800 13.400 h2.800" stroke="#fff" stroke-width="0.900" fill="none"/></svg>
<div class="t " style="left:125px;top:329.5px;font-size:12px;height:14px;line-height:14px;color:#1a1a1a;"><span style="letter-spacing:0.5px">query</span></div>
<svg style="left:86px;top:353.0px" width="6" height="10" viewBox="0 0 6 10"><path d="M0.700 0.800 l4.300 4.200 l-4.300 4.200 z" fill="#fff" stroke="#a0a0a0" stroke-width="1"/></svg>
<svg style="left:96.5px;top:353.0px" width="9" height="10" viewBox="0 0 9 10"><path d="M2.300 4.500 v-1.500 a2.200 2.200 0 0 1 4.400 0 v1.500" stroke="#7a9cf0" stroke-width="1.300" fill="none"/><rect x="0.500" y="4.300" width="8" height="5.400" rx="0.800" fill="#2f6fe8"/><rect x="3.800" y="6" width="1.400" height="2.200" fill="#cfe0ff"/></svg>
<svg style="left:109px;top:350.0px" width="15" height="16" viewBox="0 0 15 16"><rect x="1" y="0.700" width="6.500" height="14" fill="#dfe6f8" stroke="#7c93d8" stroke-width="1"/><path d="M2.500 3.500h3.500M2.500 6h3.500M2.500 8.500h3.500" stroke="#7c93d8" stroke-width="0.900"/><path d="M7.300 8 v-1.300 a2.400 2.400 0 0 1 4.800 0 v1.300" stroke="#f6b84a" stroke-width="1.500" fill="none"/><rect x="5" y="7.300" width="9.500" height="8" rx="0.800" fill="#f5a623"/><path d="M7 9.800 l1.800 1.600 l-1.800 1.600 M9.800 13.400 h2.800" stroke="#fff" stroke-width="0.900" fill="none"/></svg>
<div class="t " style="left:125px;top:352.0px;font-size:12px;height:14px;line-height:14px;color:#1a1a1a;">知识库权限检查</div>
<svg style="left:86px;top:375.5px" width="6" height="10" viewBox="0 0 6 10"><path d="M0.700 0.800 l4.300 4.200 l-4.300 4.200 z" fill="#fff" stroke="#a0a0a0" stroke-width="1"/></svg>
<svg style="left:96.5px;top:375.5px" width="9" height="10" viewBox="0 0 9 10"><path d="M2.300 4.500 v-1.500 a2.200 2.200 0 0 1 4.400 0 v1.500" stroke="#7a9cf0" stroke-width="1.300" fill="none"/><rect x="0.500" y="4.300" width="8" height="5.400" rx="0.800" fill="#2f6fe8"/><rect x="3.800" y="6" width="1.400" height="2.200" fill="#cfe0ff"/></svg>
<svg style="left:109px;top:372.5px" width="15" height="16" viewBox="0 0 15 16"><rect x="1" y="0.700" width="6.500" height="14" fill="#dfe6f8" stroke="#7c93d8" stroke-width="1"/><path d="M2.500 3.500h3.500M2.500 6h3.500M2.500 8.500h3.500" stroke="#7c93d8" stroke-width="0.900"/><path d="M7.300 8 v-1.300 a2.400 2.400 0 0 1 4.800 0 v1.300" stroke="#f6b84a" stroke-width="1.500" fill="none"/><rect x="5" y="7.300" width="9.500" height="8" rx="0.800" fill="#f5a623"/><path d="M7 9.800 l1.800 1.600 l-1.800 1.600 M9.800 13.400 h2.800" stroke="#fff" stroke-width="0.900" fill="none"/></svg>
<div class="t " style="left:125px;top:374.5px;font-size:12px;height:14px;line-height:14px;color:#1a1a1a;">加载知识库</div>
<svg style="left:86px;top:398.0px" width="6" height="10" viewBox="0 0 6 10"><path d="M0.700 0.800 l4.300 4.200 l-4.300 4.200 z" fill="#fff" stroke="#a0a0a0" stroke-width="1"/></svg>
<svg style="left:96.5px;top:398.0px" width="9" height="10" viewBox="0 0 9 10"><path d="M2.300 4.500 v-1.500 a2.200 2.200 0 0 1 4.400 0 v1.500" stroke="#7a9cf0" stroke-width="1.300" fill="none"/><rect x="0.500" y="4.300" width="8" height="5.400" rx="0.800" fill="#2f6fe8"/><rect x="3.800" y="6" width="1.400" height="2.200" fill="#cfe0ff"/></svg>
<svg style="left:109px;top:395.0px" width="15" height="16" viewBox="0 0 15 16"><rect x="1" y="0.700" width="6.500" height="14" fill="#dfe6f8" stroke="#7c93d8" stroke-width="1"/><path d="M2.500 3.500h3.500M2.500 6h3.500M2.500 8.500h3.500" stroke="#7c93d8" stroke-width="0.900"/><rect x="5.500" y="8" width="9" height="7.300" rx="0.800" fill="#2f6fe0"/><path d="M7.300 10 l1.800 1.600 l-1.800 1.600 M10 13.500 h2.800" stroke="#fff" stroke-width="0.900" fill="none"/></svg>
<div class="t " style="left:125px;top:397.0px;font-size:12px;height:14px;line-height:14px;color:#1a1a1a;">AI文本切片</div>
<svg style="left:86px;top:420.0px" width="6" height="10" viewBox="0 0 6 10"><path d="M0.700 0.800 l4.300 4.200 l-4.300 4.200 z" fill="#fff" stroke="#a0a0a0" stroke-width="1"/></svg>
<svg style="left:96.5px;top:420.0px" width="9" height="10" viewBox="0 0 9 10"><path d="M2.300 4.500 v-1.500 a2.200 2.200 0 0 1 4.400 0 v1.500" stroke="#7a9cf0" stroke-width="1.300" fill="none"/><rect x="0.500" y="4.300" width="8" height="5.400" rx="0.800" fill="#2f6fe8"/><rect x="3.800" y="6" width="1.400" height="2.200" fill="#cfe0ff"/></svg>
<svg style="left:109px;top:417.0px" width="15" height="16" viewBox="0 0 15 16"><rect x="1" y="0.700" width="6.500" height="14" fill="#dfe6f8" stroke="#7c93d8" stroke-width="1"/><path d="M2.500 3.500h3.500M2.500 6h3.500M2.500 8.500h3.500" stroke="#7c93d8" stroke-width="0.900"/><rect x="5.500" y="8" width="9" height="7.300" rx="0.800" fill="#2f6fe0"/><path d="M7.300 10 l1.800 1.600 l-1.800 1.600 M10 13.500 h2.800" stroke="#fff" stroke-width="0.900" fill="none"/></svg>
<div class="t " style="left:125px;top:419.0px;font-size:12px;height:14px;line-height:14px;color:#1a1a1a;">添加文本切片到知识库</div>
<svg style="left:86px;top:442.5px" width="6" height="10" viewBox="0 0 6 10"><path d="M0.700 0.800 l4.300 4.200 l-4.300 4.200 z" fill="#fff" stroke="#a0a0a0" stroke-width="1"/></svg>
<svg style="left:96.5px;top:442.5px" width="9" height="10" viewBox="0 0 9 10"><path d="M2.300 4.500 v-1.500 a2.200 2.200 0 0 1 4.400 0 v1.500" stroke="#7a9cf0" stroke-width="1.300" fill="none"/><rect x="0.500" y="4.300" width="8" height="5.400" rx="0.800" fill="#2f6fe8"/><rect x="3.800" y="6" width="1.400" height="2.200" fill="#cfe0ff"/></svg>
<svg style="left:109px;top:439.5px" width="15" height="16" viewBox="0 0 15 16"><rect x="1" y="0.700" width="6.500" height="14" fill="#dfe6f8" stroke="#7c93d8" stroke-width="1"/><path d="M2.500 3.500h3.500M2.500 6h3.500M2.500 8.500h3.500" stroke="#7c93d8" stroke-width="0.900"/><rect x="5.500" y="8" width="9" height="7.300" rx="0.800" fill="#2f6fe0"/><path d="M7.300 10 l1.800 1.600 l-1.800 1.600 M10 13.500 h2.800" stroke="#fff" stroke-width="0.900" fill="none"/></svg>
<div class="t " style="left:125px;top:441.5px;font-size:12px;height:14px;line-height:14px;color:#1a1a1a;">添加问答记录到知识库</div>
<svg style="left:86px;top:465.0px" width="6" height="10" viewBox="0 0 6 10"><path d="M0.700 0.800 l4.300 4.200 l-4.300 4.200 z" fill="#fff" stroke="#a0a0a0" stroke-width="1"/></svg>
<svg style="left:96.5px;top:465.0px" width="9" height="10" viewBox="0 0 9 10"><path d="M2.300 4.500 v-1.500 a2.200 2.200 0 0 1 4.400 0 v1.500" stroke="#7a9cf0" stroke-width="1.300" fill="none"/><rect x="0.500" y="4.300" width="8" height="5.400" rx="0.800" fill="#2f6fe8"/><rect x="3.800" y="6" width="1.400" height="2.200" fill="#cfe0ff"/></svg>
<svg style="left:109px;top:462.0px" width="15" height="16" viewBox="0 0 15 16"><rect x="1" y="0.700" width="6.500" height="14" fill="#dfe6f8" stroke="#7c93d8" stroke-width="1"/><path d="M2.500 3.500h3.500M2.500 6h3.500M2.500 8.500h3.500" stroke="#7c93d8" stroke-width="0.900"/><rect x="5.500" y="8" width="9" height="7.300" rx="0.800" fill="#2f6fe0"/><path d="M7.300 10 l1.800 1.600 l-1.800 1.600 M10 13.500 h2.800" stroke="#fff" stroke-width="0.900" fill="none"/></svg>
<div class="t " style="left:125px;top:464.0px;font-size:12px;height:14px;line-height:14px;color:#1a1a1a;">重置文本切片矢量库</div>
<svg style="left:86px;top:487.5px" width="6" height="10" viewBox="0 0 6 10"><path d="M0.700 0.800 l4.300 4.200 l-4.300 4.200 z" fill="#fff" stroke="#a0a0a0" stroke-width="1"/></svg>
<svg style="left:96.5px;top:487.5px" width="9" height="10" viewBox="0 0 9 10"><path d="M2.300 4.500 v-1.500 a2.200 2.200 0 0 1 4.400 0 v1.500" stroke="#7a9cf0" stroke-width="1.300" fill="none"/><rect x="0.500" y="4.300" width="8" height="5.400" rx="0.800" fill="#2f6fe8"/><rect x="3.800" y="6" width="1.400" height="2.200" fill="#cfe0ff"/></svg>
<svg style="left:109px;top:484.5px" width="15" height="16" viewBox="0 0 15 16"><rect x="1" y="0.700" width="6.500" height="14" fill="#dfe6f8" stroke="#7c93d8" stroke-width="1"/><path d="M2.500 3.500h3.500M2.500 6h3.500M2.500 8.500h3.500" stroke="#7c93d8" stroke-width="0.900"/><rect x="5.500" y="8" width="9" height="7.300" rx="0.800" fill="#2f6fe0"/><path d="M7.300 10 l1.800 1.600 l-1.800 1.600 M10 13.500 h2.800" stroke="#fff" stroke-width="0.900" fill="none"/></svg>
<div class="t " style="left:125px;top:486.5px;font-size:12px;height:14px;line-height:14px;color:#1a1a1a;">重置优选问答矢量库</div>
<svg style="left:86px;top:510.0px" width="6" height="10" viewBox="0 0 6 10"><path d="M0.700 0.800 l4.300 4.200 l-4.300 4.200 z" fill="#fff" stroke="#a0a0a0" stroke-width="1"/></svg>
<svg style="left:96.5px;top:510.0px" width="9" height="10" viewBox="0 0 9 10"><path d="M2.300 4.500 v-1.500 a2.200 2.200 0 0 1 4.400 0 v1.500" stroke="#7a9cf0" stroke-width="1.300" fill="none"/><rect x="0.500" y="4.300" width="8" height="5.400" rx="0.800" fill="#2f6fe8"/><rect x="3.800" y="6" width="1.400" height="2.200" fill="#cfe0ff"/></svg>
<svg style="left:109px;top:507.0px" width="15" height="16" viewBox="0 0 15 16"><rect x="1" y="0.700" width="6.500" height="14" fill="#dfe6f8" stroke="#7c93d8" stroke-width="1"/><path d="M2.500 3.500h3.500M2.500 6h3.500M2.500 8.500h3.500" stroke="#7c93d8" stroke-width="0.900"/><rect x="5.500" y="8" width="9" height="7.300" rx="0.800" fill="#2f6fe0"/><path d="M7.300 10 l1.800 1.600 l-1.800 1.600 M10 13.500 h2.800" stroke="#fff" stroke-width="0.900" fill="none"/></svg>
<div class="t " style="left:125px;top:509.0px;font-size:12px;height:14px;line-height:14px;color:#1a1a1a;">从知识库中移除文本切片</div>
<svg style="left:86px;top:532.0px" width="6" height="10" viewBox="0 0 6 10"><path d="M0.700 0.800 l4.300 4.200 l-4.300 4.200 z" fill="#fff" stroke="#a0a0a0" stroke-width="1"/></svg>
<svg style="left:96.5px;top:532.0px" width="9" height="10" viewBox="0 0 9 10"><path d="M2.300 4.500 v-1.500 a2.200 2.200 0 0 1 4.400 0 v1.500" stroke="#7a9cf0" stroke-width="1.300" fill="none"/><rect x="0.500" y="4.300" width="8" height="5.400" rx="0.800" fill="#2f6fe8"/><rect x="3.800" y="6" width="1.400" height="2.200" fill="#cfe0ff"/></svg>
<svg style="left:109px;top:529.0px" width="15" height="16" viewBox="0 0 15 16"><rect x="1" y="0.700" width="6.500" height="14" fill="#dfe6f8" stroke="#7c93d8" stroke-width="1"/><path d="M2.500 3.500h3.500M2.500 6h3.500M2.500 8.500h3.500" stroke="#7c93d8" stroke-width="0.900"/><rect x="5.500" y="8" width="9" height="7.300" rx="0.800" fill="#2f6fe0"/><path d="M7.300 10 l1.800 1.600 l-1.800 1.600 M10 13.500 h2.800" stroke="#fff" stroke-width="0.900" fill="none"/></svg>
<div class="t " style="left:125px;top:531.0px;font-size:12px;height:14px;line-height:14px;color:#1a1a1a;">从知识库中移除优选问答</div>
<svg style="left:86px;top:554.5px" width="6" height="10" viewBox="0 0 6 10"><path d="M0.700 0.800 l4.300 4.200 l-4.300 4.200 z" fill="#fff" stroke="#a0a0a0" stroke-width="1"/></svg>
<svg style="left:96.5px;top:554.5px" width="9" height="10" viewBox="0 0 9 10"><path d="M2.300 4.500 v-1.500 a2.200 2.200 0 0 1 4.400 0 v1.500" stroke="#7a9cf0" stroke-width="1.300" fill="none"/><rect x="0.500" y="4.300" width="8" height="5.400" rx="0.800" fill="#2f6fe8"/><rect x="3.800" y="6" width="1.400" height="2.200" fill="#cfe0ff"/></svg>
<svg style="left:109px;top:551.5px" width="15" height="16" viewBox="0 0 15 16"><rect x="1" y="0.700" width="6.500" height="14" fill="#dfe6f8" stroke="#7c93d8" stroke-width="1"/><path d="M2.500 3.500h3.500M2.500 6h3.500M2.500 8.500h3.500" stroke="#7c93d8" stroke-width="0.900"/><rect x="5.500" y="8" width="9" height="7.300" rx="0.800" fill="#2f6fe0"/><path d="M7.300 10 l1.800 1.600 l-1.800 1.600 M10 13.500 h2.800" stroke="#fff" stroke-width="0.900" fill="none"/></svg>
<div class="t " style="left:125px;top:553.5px;font-size:12px;height:14px;line-height:14px;color:#1a1a1a;">创建知识库</div>
<svg style="left:86px;top:577.0px" width="6" height="10" viewBox="0 0 6 10"><path d="M0.700 0.800 l4.300 4.200 l-4.300 4.200 z" fill="#fff" stroke="#a0a0a0" stroke-width="1"/></svg>
<svg style="left:96.5px;top:577.0px" width="9" height="10" viewBox="0 0 9 10"><path d="M2.300 4.500 v-1.500 a2.200 2.200 0 0 1 4.400 0 v1.500" stroke="#7a9cf0" stroke-width="1.300" fill="none"/><rect x="0.500" y="4.300" width="8" height="5.400" rx="0.800" fill="#2f6fe8"/><rect x="3.800" y="6" width="1.400" height="2.200" fill="#cfe0ff"/></svg>
<svg style="left:109px;top:574.0px" width="15" height="16" viewBox="0 0 15 16"><rect x="1" y="0.700" width="6.500" height="14" fill="#dfe6f8" stroke="#7c93d8" stroke-width="1"/><path d="M2.500 3.500h3.500M2.500 6h3.500M2.500 8.500h3.500" stroke="#7c93d8" stroke-width="0.900"/><rect x="5.500" y="8" width="9" height="7.300" rx="0.800" fill="#2f6fe0"/><path d="M7.300 10 l1.800 1.600 l-1.800 1.600 M10 13.500 h2.800" stroke="#fff" stroke-width="0.900" fill="none"/></svg>
<div class="t " style="left:125px;top:576.0px;font-size:12px;height:14px;line-height:14px;color:#1a1a1a;">移除知识库</div>
<svg style="left:86px;top:599.5px" width="6" height="10" viewBox="0 0 6 10"><path d="M0.700 0.800 l4.300 4.200 l-4.300 4.200 z" fill="#fff" stroke="#a0a0a0" stroke-width="1"/></svg>
<svg style="left:96.5px;top:599.5px" width="9" height="10" viewBox="0 0 9 10"><path d="M2.300 4.500 v-1.500 a2.200 2.200 0 0 1 4.400 0 v1.500" stroke="#7a9cf0" stroke-width="1.300" fill="none"/><rect x="0.500" y="4.300" width="8" height="5.400" rx="0.800" fill="#2f6fe8"/><rect x="3.800" y="6" width="1.400" height="2.200" fill="#cfe0ff"/></svg>
<svg style="left:109px;top:596.5px" width="15" height="16" viewBox="0 0 15 16"><rect x="1" y="0.700" width="6.500" height="14" fill="#dfe6f8" stroke="#7c93d8" stroke-width="1"/><path d="M2.500 3.500h3.500M2.500 6h3.500M2.500 8.500h3.500" stroke="#7c93d8" stroke-width="0.900"/><rect x="5.500" y="8" width="9" height="7.300" rx="0.800" fill="#2f6fe0"/><path d="M7.300 10 l1.800 1.600 l-1.800 1.600 M10 13.500 h2.800" stroke="#fff" stroke-width="0.900" fill="none"/></svg>
<div class="t " style="left:125px;top:598.5px;font-size:12px;height:14px;line-height:14px;color:#1a1a1a;">重命名知识库</div>
<svg style="left:86px;top:622.0px" width="6" height="10" viewBox="0 0 6 10"><path d="M0.700 0.800 l4.300 4.200 l-4.300 4.200 z" fill="#fff" stroke="#a0a0a0" stroke-width="1"/></svg>
<svg style="left:96.5px;top:622.0px" width="9" height="10" viewBox="0 0 9 10"><path d="M2.300 4.500 v-1.500 a2.200 2.200 0 0 1 4.400 0 v1.500" stroke="#7a9cf0" stroke-width="1.300" fill="none"/><rect x="0.500" y="4.300" width="8" height="5.400" rx="0.800" fill="#2f6fe8"/><rect x="3.800" y="6" width="1.400" height="2.200" fill="#cfe0ff"/></svg>
<svg style="left:109px;top:619.0px" width="15" height="16" viewBox="0 0 15 16"><rect x="1" y="0.700" width="6.500" height="14" fill="#dfe6f8" stroke="#7c93d8" stroke-width="1"/><path d="M2.500 3.500h3.500M2.500 6h3.500M2.500 8.500h3.500" stroke="#7c93d8" stroke-width="0.900"/><rect x="5.500" y="8" width="9" height="7.300" rx="0.800" fill="#2f6fe0"/><path d="M7.300 10 l1.800 1.600 l-1.800 1.600 M10 13.500 h2.800" stroke="#fff" stroke-width="0.900" fill="none"/></svg>
<div class="t " style="left:125px;top:621.0px;font-size:12px;height:14px;line-height:14px;color:#1a1a1a;">为知识库添加授权</div>
<svg style="left:86px;top:644.0px" width="6" height="10" viewBox="0 0 6 10"><path d="M0.700 0.800 l4.300 4.200 l-4.300 4.200 z" fill="#fff" stroke="#a0a0a0" stroke-width="1"/></svg>
<svg style="left:96.5px;top:644.0px" width="9" height="10" viewBox="0 0 9 10"><path d="M2.300 4.500 v-1.500 a2.200 2.200 0 0 1 4.400 0 v1.500" stroke="#7a9cf0" stroke-width="1.300" fill="none"/><rect x="0.500" y="4.300" width="8" height="5.400" rx="0.800" fill="#2f6fe8"/><rect x="3.800" y="6" width="1.400" height="2.200" fill="#cfe0ff"/></svg>
<svg style="left:109px;top:641.0px" width="15" height="16" viewBox="0 0 15 16"><rect x="1" y="0.700" width="6.500" height="14" fill="#dfe6f8" stroke="#7c93d8" stroke-width="1"/><path d="M2.500 3.500h3.500M2.500 6h3.500M2.500 8.500h3.500" stroke="#7c93d8" stroke-width="0.900"/><rect x="5.500" y="8" width="9" height="7.300" rx="0.800" fill="#2f6fe0"/><path d="M7.300 10 l1.800 1.600 l-1.800 1.600 M10 13.500 h2.800" stroke="#fff" stroke-width="0.900" fill="none"/></svg>
<div class="t " style="left:125px;top:643.0px;font-size:12px;height:14px;line-height:14px;color:#1a1a1a;">吊销指定角色的知识库授权</div>
<svg style="left:86px;top:666.5px" width="6" height="10" viewBox="0 0 6 10"><path d="M0.700 0.800 l4.300 4.200 l-4.300 4.200 z" fill="#fff" stroke="#a0a0a0" stroke-width="1"/></svg>
<svg style="left:96.5px;top:666.5px" width="9" height="10" viewBox="0 0 9 10"><path d="M2.300 4.500 v-1.500 a2.200 2.200 0 0 1 4.400 0 v1.500" stroke="#7a9cf0" stroke-width="1.300" fill="none"/><rect x="0.500" y="4.300" width="8" height="5.400" rx="0.800" fill="#2f6fe8"/><rect x="3.800" y="6" width="1.400" height="2.200" fill="#cfe0ff"/></svg>
<svg style="left:109px;top:663.5px" width="15" height="16" viewBox="0 0 15 16"><rect x="1" y="0.700" width="6.500" height="14" fill="#dfe6f8" stroke="#7c93d8" stroke-width="1"/><path d="M2.500 3.500h3.500M2.500 6h3.500M2.500 8.500h3.500" stroke="#7c93d8" stroke-width="0.900"/><rect x="5.500" y="8" width="9" height="7.300" rx="0.800" fill="#2f6fe0"/><path d="M7.300 10 l1.800 1.600 l-1.800 1.600 M10 13.500 h2.800" stroke="#fff" stroke-width="0.900" fill="none"/></svg>
<div class="t " style="left:125px;top:665.5px;font-size:12px;height:14px;line-height:14px;color:#1a1a1a;">吊销指定秘钥的知识库授权</div>
<svg style="left:86px;top:689.0px" width="6" height="10" viewBox="0 0 6 10"><path d="M0.700 0.800 l4.300 4.200 l-4.300 4.200 z" fill="#fff" stroke="#a0a0a0" stroke-width="1"/></svg>
<svg style="left:96.5px;top:689.0px" width="9" height="10" viewBox="0 0 9 10"><path d="M2.300 4.500 v-1.500 a2.200 2.200 0 0 1 4.400 0 v1.500" stroke="#7a9cf0" stroke-width="1.300" fill="none"/><rect x="0.500" y="4.300" width="8" height="5.400" rx="0.800" fill="#2f6fe8"/><rect x="3.800" y="6" width="1.400" height="2.200" fill="#cfe0ff"/></svg>
<svg style="left:109px;top:686.0px" width="15" height="16" viewBox="0 0 15 16"><rect x="1" y="0.700" width="6.500" height="14" fill="#dfe6f8" stroke="#7c93d8" stroke-width="1"/><path d="M2.500 3.500h3.500M2.500 6h3.500M2.500 8.500h3.500" stroke="#7c93d8" stroke-width="0.900"/><rect x="5.500" y="8" width="9" height="7.300" rx="0.800" fill="#2f6fe0"/><path d="M7.300 10 l1.800 1.600 l-1.800 1.600 M10 13.500 h2.800" stroke="#fff" stroke-width="0.900" fill="none"/></svg>
<div class="t " style="left:125px;top:688.0px;font-size:12px;height:14px;line-height:14px;color:#1a1a1a;">上移文本切片</div>
<svg style="left:86px;top:711.5px" width="6" height="10" viewBox="0 0 6 10"><path d="M0.700 0.800 l4.300 4.200 l-4.300 4.200 z" fill="#fff" stroke="#a0a0a0" stroke-width="1"/></svg>
<svg style="left:96.5px;top:711.5px" width="9" height="10" viewBox="0 0 9 10"><path d="M2.300 4.500 v-1.500 a2.200 2.200 0 0 1 4.400 0 v1.500" stroke="#7a9cf0" stroke-width="1.300" fill="none"/><rect x="0.500" y="4.300" width="8" height="5.400" rx="0.800" fill="#2f6fe8"/><rect x="3.800" y="6" width="1.400" height="2.200" fill="#cfe0ff"/></svg>
<svg style="left:109px;top:708.5px" width="15" height="16" viewBox="0 0 15 16"><rect x="1" y="0.700" width="6.500" height="14" fill="#dfe6f8" stroke="#7c93d8" stroke-width="1"/><path d="M2.500 3.500h3.500M2.500 6h3.500M2.500 8.500h3.500" stroke="#7c93d8" stroke-width="0.900"/><rect x="5.500" y="8" width="9" height="7.300" rx="0.800" fill="#2f6fe0"/><path d="M7.300 10 l1.800 1.600 l-1.800 1.600 M10 13.500 h2.800" stroke="#fff" stroke-width="0.900" fill="none"/></svg>
<div class="t " style="left:125px;top:710.5px;font-size:12px;height:14px;line-height:14px;color:#1a1a1a;">下移文本切片</div>
<svg style="left:86px;top:734.0px" width="6" height="10" viewBox="0 0 6 10"><path d="M0.700 0.800 l4.300 4.200 l-4.300 4.200 z" fill="#fff" stroke="#a0a0a0" stroke-width="1"/></svg>
<svg style="left:96.5px;top:734.0px" width="9" height="10" viewBox="0 0 9 10"><path d="M2.300 4.500 v-1.500 a2.200 2.200 0 0 1 4.400 0 v1.500" stroke="#7a9cf0" stroke-width="1.300" fill="none"/><rect x="0.500" y="4.300" width="8" height="5.400" rx="0.800" fill="#2f6fe8"/><rect x="3.800" y="6" width="1.400" height="2.200" fill="#cfe0ff"/></svg>
<svg style="left:109px;top:731.0px" width="15" height="16" viewBox="0 0 15 16"><rect x="1" y="0.700" width="6.500" height="14" fill="#dfe6f8" stroke="#7c93d8" stroke-width="1"/><path d="M2.500 3.500h3.500M2.500 6h3.500M2.500 8.500h3.500" stroke="#7c93d8" stroke-width="0.900"/><rect x="5.500" y="8" width="9" height="7.300" rx="0.800" fill="#2f6fe0"/><path d="M7.300 10 l1.800 1.600 l-1.800 1.600 M10 13.500 h2.800" stroke="#fff" stroke-width="0.900" fill="none"/></svg>
<div class="t " style="left:125px;top:733.0px;font-size:12px;height:14px;line-height:14px;color:#1a1a1a;">获取知识库完整文本</div>
<svg style="left:70px;top:757.0px" width="8" height="8" viewBox="0 0 8 8"><path d="M7 0.500 v6.500 h-6.500 z" fill="#444"/></svg>
<svg style="left:85px;top:756.0px" width="9" height="10" viewBox="0 0 9 10"><path d="M2.300 4.500 v-1.500 a2.200 2.200 0 0 1 4.400 0 v1.500" stroke="#7a9cf0" stroke-width="1.300" fill="none"/><rect x="0.500" y="4.300" width="8" height="5.400" rx="0.800" fill="#2f6fe8"/><rect x="3.800" y="6" width="1.400" height="2.200" fill="#cfe0ff"/></svg>
<svg style="left:96px;top:754.0px" width="17" height="14" viewBox="0 0 17 14"><path d="M1 12.500 v-10.500 h4.500 l1.500 1.800 h6.500 v2.200" fill="#fbe9a8" stroke="#e8c860" stroke-width="1"/><path d="M1 12.500 l2.800 -6.700 h12 l-2.800 6.700 z" fill="#fdf3cc" stroke="#e8c860" stroke-width="1"/></svg>
<div class="t " style="left:113px;top:755.0px;font-size:12px;height:14px;line-height:14px;color:#1a1a1a;">第三方服务</div>
<div class="a" style="left:53px;top:773px;width:260px;height:22px;background:#d6deef;"></div>
<svg style="left:303px;top:777px" width="4" height="14" viewBox="0 0 4 14"><circle cx="2" cy="2" r="1" fill="#777"/><circle cx="2" cy="7" r="1" fill="#777"/><circle cx="2" cy="12" r="1" fill="#777"/></svg>
<svg style="left:86px;top:778.5px" width="6" height="10" viewBox="0 0 6 10"><path d="M0.700 0.800 l4.300 4.200 l-4.300 4.200 z" fill="#fff" stroke="#a0a0a0" stroke-width="1"/></svg>
<svg style="left:96.5px;top:778.5px" width="9" height="10" viewBox="0 0 9 10"><path d="M2.300 4.500 v-1.500 a2.200 2.200 0 0 1 4.400 0 v1.500" stroke="#7a9cf0" stroke-width="1.300" fill="none"/><rect x="0.500" y="4.300" width="8" height="5.400" rx="0.800" fill="#2f6fe8"/><rect x="3.800" y="6" width="1.400" height="2.200" fill="#cfe0ff"/></svg>
<svg style="left:109px;top:775.5px" width="15" height="16" viewBox="0 0 15 16"><rect x="1" y="0.700" width="6.500" height="14" fill="#dfe6f8" stroke="#7c93d8" stroke-width="1"/><path d="M2.500 3.500h3.500M2.500 6h3.500M2.500 8.500h3.500" stroke="#7c93d8" stroke-width="0.900"/><path d="M7.300 8 v-1.300 a2.400 2.400 0 0 1 4.800 0 v1.300" stroke="#f6b84a" stroke-width="1.500" fill="none"/><rect x="5" y="7.300" width="9.500" height="8" rx="0.800" fill="#f5a623"/><path d="M7 9.800 l1.800 1.600 l-1.800 1.600 M9.800 13.400 h2.800" stroke="#fff" stroke-width="0.900" fill="none"/></svg>
<div class="t " style="left:125px;top:777.5px;font-size:12px;height:14px;line-height:14px;color:#1a1a1a;">生成向量（阿里云百炼）</div>
<svg style="left:86px;top:801.0px" width="6" height="10" viewBox="0 0 6 10"><path d="M0.700 0.800 l4.300 4.200 l-4.300 4.200 z" fill="#fff" stroke="#a0a0a0" stroke-width="1"/></svg>
<svg style="left:96.5px;top:801.0px" width="9" height="10" viewBox="0 0 9 10"><path d="M2.300 4.500 v-1.500 a2.200 2.200 0 0 1 4.400 0 v1.500" stroke="#7a9cf0" stroke-width="1.300" fill="none"/><rect x="0.500" y="4.300" width="8" height="5.400" rx="0.800" fill="#2f6fe8"/><rect x="3.800" y="6" width="1.400" height="2.200" fill="#cfe0ff"/></svg>
<svg style="left:109px;top:798.0px" width="15" height="16" viewBox="0 0 15 16"><rect x="1" y="0.700" width="6.500" height="14" fill="#dfe6f8" stroke="#7c93d8" stroke-width="1"/><path d="M2.500 3.500h3.500M2.500 6h3.500M2.500 8.500h3.500" stroke="#7c93d8" stroke-width="0.900"/><path d="M7.300 8 v-1.300 a2.400 2.400 0 0 1 4.800 0 v1.300" stroke="#f6b84a" stroke-width="1.500" fill="none"/><rect x="5" y="7.300" width="9.500" height="8" rx="0.800" fill="#f5a623"/><path d="M7 9.800 l1.800 1.600 l-1.800 1.600 M9.800 13.400 h2.800" stroke="#fff" stroke-width="0.900" fill="none"/></svg>
<div class="t " style="left:125px;top:800.0px;font-size:12px;height:14px;line-height:14px;color:#1a1a1a;">文本重排（阿里云百炼）</div>
<svg style="left:70px;top:824.5px" width="8" height="8" viewBox="0 0 8 8"><path d="M7 0.500 v6.500 h-6.500 z" fill="#444"/></svg>
<svg style="left:85px;top:823.5px" width="9" height="10" viewBox="0 0 9 10"><path d="M2.300 4.500 v-1.500 a2.200 2.200 0 0 1 4.400 0 v1.500" stroke="#7a9cf0" stroke-width="1.300" fill="none"/><rect x="0.500" y="4.300" width="8" height="5.400" rx="0.800" fill="#2f6fe8"/><rect x="3.800" y="6" width="1.400" height="2.200" fill="#cfe0ff"/></svg>
<svg style="left:96px;top:821.5px" width="17" height="14" viewBox="0 0 17 14"><path d="M1 12.500 v-10.500 h4.500 l1.500 1.800 h6.500 v2.200" fill="#fbe9a8" stroke="#e8c860" stroke-width="1"/><path d="M1 12.500 l2.800 -6.700 h12 l-2.800 6.700 z" fill="#fdf3cc" stroke="#e8c860" stroke-width="1"/></svg>
<div class="t " style="left:113px;top:822.5px;font-size:12px;height:14px;line-height:14px;color:#1a1a1a;">对外服务</div>
<svg style="left:86px;top:846.0px" width="6" height="10" viewBox="0 0 6 10"><path d="M0.700 0.800 l4.300 4.200 l-4.300 4.200 z" fill="#fff" stroke="#a0a0a0" stroke-width="1"/></svg>
<svg style="left:96.5px;top:846.0px" width="9" height="10" viewBox="0 0 9 10"><path d="M2.300 4.500 v-1.500 a2.200 2.200 0 0 1 4.400 0 v1.500" stroke="#7a9cf0" stroke-width="1.300" fill="none"/><rect x="0.500" y="4.300" width="8" height="5.400" rx="0.800" fill="#2f6fe8"/><rect x="3.800" y="6" width="1.400" height="2.200" fill="#cfe0ff"/></svg>
<svg style="left:109px;top:843.0px" width="15" height="16" viewBox="0 0 15 16"><rect x="1" y="0.700" width="6.500" height="14" fill="#dfe6f8" stroke="#7c93d8" stroke-width="1"/><path d="M2.500 3.500h3.500M2.500 6h3.500M2.500 8.500h3.500" stroke="#7c93d8" stroke-width="0.900"/><rect x="5.500" y="8" width="9" height="7.300" rx="0.800" fill="#2f6fe0"/><path d="M7.300 10 l1.800 1.600 l-1.800 1.600 M10 13.500 h2.800" stroke="#fff" stroke-width="0.900" fill="none"/></svg>
<div class="t " style="left:125px;top:845.0px;font-size:12px;height:14px;line-height:14px;color:#1a1a1a;"><span style="letter-spacing:0.5px">query_with_rerank</span></div>
<div class="t " style="left:69.5px;top:867.0px;font-size:12px;height:14px;line-height:14px;color:#1a1a1a;font-weight:500">计划任务</div>
<div class="t " style="left:69.5px;top:889.5px;font-size:12px;height:14px;line-height:14px;color:#1a1a1a;font-weight:500">服务端通知</div>
<div class="t " style="left:69.5px;top:912.0px;font-size:12px;height:14px;line-height:14px;color:#1a1a1a;font-weight:500">模板命令</div>
<div class="a" style="left:0px;top:1007px;width:1920px;height:25px;background:#f7f7f7;"></div>
<div class="a" style="left:0px;top:1006px;width:1920px;height:1px;background:#e0e0e0;"></div>
<svg style="left:6px;top:1012px" width="16" height="16" viewBox="0 0 16 16"><rect x="1" y="1.500" width="13" height="13" fill="#fff" stroke="#5a8a6a" stroke-width="1.200"/><path d="M3 5h2M6.500 5h6M3 8h2M6.500 8h6M3 11h2M6.500 11h6" stroke="#5a8a6a" stroke-width="1.200"/></svg>
<div class="t " style="left:27px;top:1014.5px;font-size:12px;height:14px;line-height:14px;color:#222;">显示模式</div>
<svg style="left:82px;top:1013px" width="15" height="15" viewBox="0 0 15 15"><rect x="0.500" y="0.500" width="14" height="14" fill="#3c4a5c"/><path d="M3 4 l3.500 3 l-3.500 3 M8 11 h4" stroke="#fff" stroke-width="1.200" fill="none"/></svg>
<svg style="left:114px;top:1013px" width="14" height="16" viewBox="0 0 14 16"><path d="M3 1.500 h7 v6 q0 2 -3.500 3 q-3.500 -1 -3.500 -3 z" fill="#f6c443"/><path d="M4.500 11.500 h4 M3 14 h7" stroke="#c9a85a" stroke-width="1.500"/></svg>
<div class="t " style="left:146px;top:1013.0px;font-size:14px;height:16px;line-height:16px;color:#4a78d8;font-family:'Liberation Serif',serif"><i>f</i></div>
<div class="t " style="left:151.5px;top:1017.5px;font-size:9px;height:11px;line-height:11px;color:#4a78d8;font-weight:bold">x</div>
<svg style="left:176px;top:1014px" width="18" height="13" viewBox="0 0 18 13"><rect x="0.500" y="0.500" width="16" height="11" fill="#eef3ff" stroke="#6f8fe0"/><text x="2.500" y="9.500" font-size="8" fill="#e06a4a" font-family="Liberation Sans,sans-serif">ab</text><path d="M13.500 2.500v7" stroke="#6f8fe0"/></svg>
<div class="a" style="left:206px;top:1010px;width:22px;height:22px;background:#dde4f0;"></div>
<svg style="left:208px;top:1012px" width="18" height="18" viewBox="0 0 18 18"><rect x="1.500" y="6.500" width="12" height="10" fill="#fff" stroke="#4a6ab0"/><rect x="1.500" y="6.500" width="12" height="3" fill="#4a6ab0"/><path d="M1.500 12.500h12M5.500 9.500v7M9.500 9.500v7" stroke="#8aa0d0"/><path d="M8 4.500 l3 -3 h5 v4 l-3 3 z" fill="#5aa05a" stroke="#3a703a" stroke-width="0.800"/></svg>
<svg style="left:241px;top:1013px" width="18" height="16" viewBox="0 0 18 16"><rect x="0.500" y="0.500" width="13" height="13" fill="#eaf0fb" stroke="#7a9ad8"/><path d="M0.500 4.500h13M5 0.500v13M9.500 0.500v13M0.500 9h13" stroke="#a5b8e0"/><rect x="6" y="5.500" width="10" height="9" fill="#4f7fd8"/><path d="M8 8h2M11.500 8h3M8 11h2M11.500 11h3" stroke="#ffd24a" stroke-width="1.500"/></svg>
<svg style="left:273px;top:1014px" width="16" height="14" viewBox="0 0 16 14"><rect x="0.500" y="0.500" width="15" height="5.200" rx="1" fill="#3f6fd0"/><rect x="0.500" y="7.500" width="15" height="5.200" rx="1" fill="#3f6fd0"/><path d="M3 3h7M3 10h7" stroke="#fff" stroke-width="1.300"/><rect x="11.500" y="2" width="2.500" height="2" fill="#fff"/><rect x="11.500" y="9" width="2.500" height="2" fill="#fff"/></svg>
<div class="t " style="left:1627px;top:1014.5px;font-size:12px;height:14px;line-height:14px;color:#222;letter-spacing:0.3px">480 x 416 像素</div>
<svg style="left:1728px;top:1013px" width="130" height="16" viewBox="0 0 130 16"><path d="M1 7.500 h6" stroke="#888" stroke-width="1.200"/><path d="M13 7.500 h98" stroke="#888" stroke-width="1"/><rect x="61" y="2" width="2.500" height="11" fill="#666"/><path d="M117 7.500 h7 M120.500 4 v7" stroke="#888" stroke-width="1.200"/></svg>
<div class="t " style="left:1870px;top:1014.5px;font-size:12px;height:14px;line-height:14px;color:#222;">100%</div>
<div class="a" style="left:324px;top:197px;width:160px;height:520px;background:#f2f2f2;"></div>
<div class="a" style="left:324px;top:232px;width:143px;height:485px;background:#fafafa;"></div>
<svg style="left:330px;top:167px" width="16" height="14" viewBox="0 0 16 14"><path d="M1 2h7M1 5.500h7M1 9h7M1 12.500h7" stroke="#999" stroke-width="1.400"/><path d="M14.500 3 l-3.500 4.200 l3.500 4.200" stroke="#666" stroke-width="1.400" fill="none"/></svg>
<div class="t " style="left:352px;top:166.5px;font-size:15px;height:17px;line-height:17px;color:#1a1a1a;">单元格类型</div>
<svg style="left:435px;top:167px" width="14" height="14" viewBox="0 0 14 14"><circle cx="7" cy="7" r="4.200" fill="none" stroke="#70747f" stroke-width="2.800"/><circle cx="7" cy="7" r="5.900" fill="none" stroke="#70747f" stroke-width="2.200" stroke-dasharray="2.400 2.230"/></svg>
<div class="a" style="left:327px;top:201px;width:152px;height:26px;background:#fff;border:1px solid #d9d9d9;"></div>
<div class="t " style="left:333px;top:208.0px;font-size:12px;height:14px;line-height:14px;color:#9a9a9a;">检索对象</div>
<svg style="left:460px;top:206px" width="16" height="16" viewBox="0 0 16 16"><circle cx="6.500" cy="6.500" r="4.800" fill="none" stroke="#aaa" stroke-width="1.300"/><path d="M10 10 l4.500 4.500" stroke="#aaa" stroke-width="1.600"/></svg>
<div class="a" style="left:467px;top:237px;width:16px;height:480px;background:#eeeeee;"></div>
<div class="a" style="left:467px;top:238px;width:16px;height:17px;background:#fff;border:1px solid #d0d0d0;"></div>
<svg style="left:471px;top:244px" width="8" height="5" viewBox="0 0 8 5"><path d="M0 4.500 l4 -4 l4 4 z" fill="#111"/></svg>
<div class="a" style="left:467px;top:257px;width:16px;height:172px;background:#fff;border:1px solid #cfcfcf;"></div>
<div class="a" style="left:467px;top:699px;width:16px;height:17px;background:#fff;border:1px solid #d0d0d0;"></div>
<svg style="left:471px;top:705px" width="8" height="5" viewBox="0 0 8 5"><path d="M0 0.500 l4 4 l4 -4 z" fill="#111"/></svg>
<svg style="left:331px;top:242px" width="9" height="6" viewBox="0 0 9 6"><path d="M0.500 5 l4 -4 l4 4" stroke="#999" fill="none" stroke-width="1.100"/></svg>
<div class="t " style="left:345px;top:239.0px;font-size:12px;height:14px;line-height:14px;color:#1a1a1a;">布局</div>
<svg style="left:348px;top:268px" width="18" height="16" viewBox="0 0 18 16"><rect x="1" y="2" width="14" height="12" rx="1" fill="#f2f2f2" stroke="#999"/><rect x="3" y="4.500" width="7" height="2.500" fill="#5b7fe0"/><rect x="3" y="9" width="4.500" height="2.500" fill="none" stroke="#5b7fe0" stroke-width="0.900"/><path d="M10.500 9.500 l3 3 M13.500 9.500 l-3 3" stroke="#5b7fe0" stroke-width="1"/></svg>
<div class="t " style="left:368px;top:270.0px;font-size:12px;height:14px;line-height:14px;color:#1a1a1a;">自由布局</div>
<svg style="left:348px;top:293.5px" width="18" height="16" viewBox="0 0 18 16"><path d="M1.500 1 v14 M14.500 1 v14" stroke="#5b7fe0" stroke-width="1.200"/><rect x="4" y="3.500" width="3" height="9" fill="none" stroke="#5b7fe0"/><rect x="9" y="3.500" width="3" height="9" fill="none" stroke="#5b7fe0"/></svg>
<div class="t " style="left:368px;top:295.5px;font-size:12px;height:14px;line-height:14px;color:#1a1a1a;">弹性布局</div>
<svg style="left:331px;top:325.5px" width="9" height="6" viewBox="0 0 9 6"><path d="M0.500 5 l4 -4 l4 4" stroke="#999" fill="none" stroke-width="1.100"/></svg>
<div class="t " style="left:345px;top:322.5px;font-size:12px;height:14px;line-height:14px;color:#1a1a1a;">基础</div>
<svg style="left:348px;top:351px" width="18" height="16" viewBox="0 0 18 16"><path d="M1.500 2.500 h6 M4.500 2.500 v6" stroke="#5b7fe0" stroke-width="1.400"/><path d="M9.500 3.500h5M9.500 6.500h5M1.500 10h13M1.500 13h13" stroke="#aaa" stroke-width="1.100"/></svg>
<div class="t " style="left:368px;top:353.0px;font-size:12px;height:14px;line-height:14px;color:#1a1a1a;">文本</div>
<svg style="left:348px;top:376.5px" width="18" height="16" viewBox="0 0 18 16"><rect x="1" y="4" width="14.500" height="8.500" rx="2.500" fill="#d6e2fb" stroke="#5b7fe0" stroke-width="1.200"/></svg>
<div class="t " style="left:368px;top:378.5px;font-size:12px;height:14px;line-height:14px;color:#1a1a1a;">按钮</div>
<svg style="left:348px;top:402px" width="18" height="16" viewBox="0 0 18 16"><rect x="1" y="4.500" width="8.500" height="6.500" rx="3.200" fill="none" stroke="#5b7fe0" stroke-width="1.600"/><rect x="7" y="4.500" width="8.500" height="6.500" rx="3.200" fill="none" stroke="#5b7fe0" stroke-width="1.600"/></svg>
<div class="t " style="left:368px;top:404.0px;font-size:12px;height:14px;line-height:14px;color:#1a1a1a;">超链接</div>
<svg style="left:348px;top:428px" width="18" height="16" viewBox="0 0 18 16"><rect x="1" y="1.500" width="14.500" height="13" fill="#eaf2fc" stroke="#5b7fe0" stroke-width="1.100"/><path d="M2 13.500 l4 -5 l3 3 l2 -2 l4 4 z" fill="#6cc08a"/><circle cx="11" cy="5.500" r="1.400" fill="#f4b642"/></svg>
<div class="t " style="left:368px;top:430.0px;font-size:12px;height:14px;line-height:14px;color:#1a1a1a;">图片</div>
<svg style="left:348px;top:453.5px" width="18" height="16" viewBox="0 0 18 16"><circle cx="7" cy="4.500" r="3.300" fill="#3f7fe6"/><path d="M1 14 q0 -5.500 6 -5.500 q6 0 6 5.500 z" fill="#3f7fe6"/><rect x="8" y="10" width="8" height="5" fill="#4bb087"/></svg>
<div class="t " style="left:368px;top:455.5px;font-size:12px;height:14px;line-height:14px;color:#1a1a1a;">登录用户</div>
<svg style="left:331px;top:485.5px" width="9" height="6" viewBox="0 0 9 6"><path d="M0.500 5 l4 -4 l4 4" stroke="#999" fill="none" stroke-width="1.100"/></svg>
<div class="t " style="left:345px;top:482.5px;font-size:12px;height:14px;line-height:14px;color:#1a1a1a;">表单</div>
<svg style="left:348px;top:511px" width="18" height="16" viewBox="0 0 18 16"><path d="M1.500 2 h5 M1.500 8.500 h5" stroke="#999" stroke-width="1.200"/><rect x="1.500" y="3.500" width="13" height="3" fill="none" stroke="#999"/><rect x="1.500" y="10" width="13" height="3" fill="none" stroke="#999"/><path d="M1.500 1.500 v12" stroke="#999"/></svg>
<div class="t " style="left:368px;top:513.0px;font-size:12px;height:14px;line-height:14px;color:#1a1a1a;">表单</div>
<svg style="left:348px;top:536.5px" width="18" height="16" viewBox="0 0 18 16"><rect x="1" y="3" width="15" height="10" fill="#eef3ff" stroke="#5b7fe0"/><text x="2.500" y="11" font-size="7.500" fill="#e0603a" font-family="Liberation Sans,sans-serif">ab</text><path d="M13 5v6" stroke="#5b7fe0"/></svg>
<div class="t " style="left:368px;top:538.5px;font-size:12px;height:14px;line-height:14px;color:#1a1a1a;">单行输入框</div>
<svg style="left:348px;top:562px" width="18" height="16" viewBox="0 0 18 16"><rect x="1" y="2" width="15" height="12" fill="#eef3ff" stroke="#5b7fe0"/><text x="6" y="12" font-size="10" font-weight="bold" fill="#333" font-family="Liberation Serif,serif">T</text><path d="M3 5h3M3 7.500h3M3 10h3" stroke="#777" stroke-width="0.800"/></svg>
<div class="t " style="left:368px;top:564.0px;font-size:12px;height:14px;line-height:14px;color:#1a1a1a;">多行输入框</div>
<svg style="left:348px;top:588px" width="18" height="16" viewBox="0 0 18 16"><rect x="2.500" y="2" width="12" height="12" fill="#fff" stroke="#5b7fe0" stroke-width="1.100"/><path d="M5 8 l2.500 2.500 l4.500 -5.500" stroke="#888" stroke-width="1.300" fill="none"/></svg>
<div class="t " style="left:368px;top:590.0px;font-size:12px;height:14px;line-height:14px;color:#1a1a1a;">复选框</div>
<svg style="left:348px;top:613.5px" width="18" height="16" viewBox="0 0 18 16"><path d="M1 11 v-9.500 h11" stroke="#5b7fe0" fill="none"/><rect x="3" y="3.500" width="12" height="11.500" fill="#fff" stroke="#5b7fe0" stroke-width="1.100"/><path d="M5.500 9.500 l2.500 2.500 l4.500 -5.500" stroke="#888" stroke-width="1.300" fill="none"/></svg>
<div class="t " style="left:368px;top:615.5px;font-size:12px;height:14px;line-height:14px;color:#1a1a1a;">组合复选框</div>
<svg style="left:348px;top:639px" width="18" height="16" viewBox="0 0 18 16"><circle cx="8.500" cy="8" r="5.800" fill="#fff" stroke="#9ab0ee" stroke-width="1.200"/><circle cx="8.500" cy="8" r="2" fill="#5b7fe0"/></svg>
<div class="t " style="left:368px;top:641.0px;font-size:12px;height:14px;line-height:14px;color:#1a1a1a;">单选按钮</div>
<svg style="left:348px;top:664.5px" width="18" height="16" viewBox="0 0 18 16"><rect x="1" y="1.500" width="15" height="13" fill="#f4f7ff" stroke="#5b7fe0" stroke-width="1.100"/><rect x="1" y="1.500" width="15" height="3" fill="#5b7fe0"/><path d="M10.500 4.500 v10" stroke="#5b7fe0"/><rect x="12" y="6.500" width="2.500" height="2" fill="#5b7fe0"/><rect x="12" y="10.500" width="2.500" height="2" fill="#5b7fe0"/></svg>
<div class="t " style="left:368px;top:666.5px;font-size:12px;height:14px;line-height:14px;color:#1a1a1a;">选择器</div>
<svg style="left:348px;top:690px" width="18" height="16" viewBox="0 0 18 16"><rect x="1" y="2.500" width="15" height="11" fill="#f4f7ff" stroke="#5b7fe0"/><text x="2.300" y="11" font-size="7.500" fill="#e0603a" font-family="Liberation Sans,sans-serif">99</text><path d="M13.500 4.500v7" stroke="#5b7fe0"/></svg>
<div class="t " style="left:368px;top:692.0px;font-size:12px;height:14px;line-height:14px;color:#1a1a1a;">数字</div>
<div class="a" style="left:349px;top:714px;width:15px;height:2px;background:#9ab0ee;"></div>
<div class="a" style="left:490px;top:162px;width:154px;height:26px;background:#fff;border:1px solid #dedede;"></div>
<div class="t " style="left:366.5px;width:400px;text-align:center;top:168.0px;font-size:13px;height:15px;line-height:15px;color:#222;letter-spacing:0.5px">InCell</div>
<svg style="left:654px;top:168px" width="4" height="14" viewBox="0 0 4 14"><circle cx="2" cy="3" r="0.900" fill="#888"/><circle cx="2" cy="7" r="0.900" fill="#888"/><circle cx="2" cy="11" r="0.900" fill="#888"/></svg>
<div class="a" style="left:670px;top:162px;width:121px;height:26px;background:#fff;border:1px solid #dedede;"></div>
<svg style="left:682px;top:167px" width="120" height="16" viewBox="0 0 120 16"><path d="M1.500 1 l11 11.500 M12.500 1 l-11 11.500" stroke="#8f8f8f" stroke-width="2" fill="none"/><path d="M41 8 l4 4 l8 -9" stroke="#b0b0b0" stroke-width="2.200" fill="none"/></svg>
<div class="t " style="left:764.5px;top:165.2px;font-size:14.5px;height:16.5px;line-height:16.5px;color:#5b7fe0;font-family:'Liberation Serif',serif"><i>f</i></div>
<div class="t " style="left:769.5px;top:169.5px;font-size:10px;height:12px;line-height:12px;color:#5b7fe0;font-weight:bold">x</div>
<div class="a" style="left:796px;top:162px;width:815px;height:26px;background:#fff;border:1px solid #dedede;"></div>
<svg style="left:1600px;top:171px" width="6" height="7" viewBox="0 0 6 7"><path d="M0.300 0.500 l2.700 2.300 l2.700 -2.300 M0.300 3.500 l2.700 2.300 l2.700 -2.300" stroke="#8a8a8a" fill="none" stroke-width="1.100"/></svg>
<div class="a" style="left:489px;top:194px;width:1123px;height:522px;background:#f0f0f0;border:1px solid #cfcfcf;"></div>
<div class="a" style="left:490px;top:195px;width:1102px;height:491px;background:#fff;"></div>
<div class="a" style="left:490px;top:195px;width:1102px;height:19px;background:#fff;"></div>
<div class="a" style="left:562px;top:195px;width:480px;height:19px;background:#d3d3d3;"></div>
<div class="a" style="left:490px;top:231px;width:40px;height:415px;background:#d0d0d0;"></div>
<div class="a" style="left:490px;top:214px;width:1102px;height:1px;background:#dcdcdc;"></div>
<svg style="left:514px;top:199px" width="13" height="13" viewBox="0 0 13 13"><path d="M12.500 0.500 v11.500 h-11.500 z" fill="#bdbdbd"/></svg>
<div class="col" style="left:530px;width:32px;color:#3a3a3a"><span class="nw">A</span></div>
<div class="a" style="left:561px;top:195px;width:1px;height:19px;background:#dcdcdc;"></div>
<div class="col" style="left:562px;width:32px;color:#3a3a3a"><span class="nw">B</span></div>
<div class="col" style="left:594px;width:32px;color:#3a3a3a"><span class="nw">C</span></div>
<div class="col" style="left:626px;width:32px;color:#cc44cc"><span class="nw">D</span></div>
<div class="col" style="left:658px;width:32px;color:#3a3a3a"><span class="nw">E</span></div>
<div class="col" style="left:690px;width:32px;color:#3a3a3a"><span class="nw">F</span></div>
<div class="col" style="left:722px;width:32px;color:#3a3a3a"><span class="nw">G</span></div>
<div class="col" style="left:754px;width:32px;color:#3a3a3a"><span class="nw">H</span></div>
<div class="col" style="left:786px;width:32px;color:#3a3a3a"><span class="nw">I</span></div>
<div class="col" style="left:818px;width:32px;color:#3a3a3a"><span class="nw">J</span></div>
<div class="col" style="left:850px;width:32px;color:#3a3a3a"><span class="nw">K</span></div>
<div class="col" style="left:882px;width:32px;color:#3a3a3a"><span class="nw">L</span></div>
<div class="col" style="left:914px;width:32px;color:#3a3a3a"><span class="nw">M</span></div>
<div class="col" style="left:946px;width:32px;color:#3a3a3a"><span class="nw">N</span></div>
<div class="col" style="left:978px;width:32px;color:#3a3a3a"><span class="nw">O</span></div>
<div class="col" style="left:1010px;width:32px;color:#3a3a3a"><span class="nw">P</span></div>
<div class="col" style="left:1042px;width:16px;color:#3a3a3a"><span class="nw">Q</span></div>
<div class="a" style="left:1057px;top:195px;width:1px;height:19px;background:#dcdcdc;"></div>
<div class="col" style="left:1058px;width:32px;color:#3a3a3a"><span class="nw">R</span></div>
<div class="a" style="left:1089px;top:195px;width:1px;height:19px;background:#dcdcdc;"></div>
<div class="col" style="left:1090px;width:16px;color:#3a3a3a"><span class="nw">S</span></div>
<div class="a" style="left:1105px;top:195px;width:1px;height:19px;background:#dcdcdc;"></div>
<div class="col" style="left:1106px;width:32px;color:#3a3a3a"><span class="nw">T</span></div>
<div class="a" style="left:1137px;top:195px;width:1px;height:19px;background:#dcdcdc;"></div>
<div class="col" style="left:1138px;width:32px;color:#3a3a3a"><span class="nw">U</span></div>
<div class="a" style="left:1169px;top:195px;width:1px;height:19px;background:#dcdcdc;"></div>
<div class="col" style="left:1170px;width:32px;color:#cc44cc"><span class="nw">V</span></div>
<div class="a" style="left:1201px;top:195px;width:1px;height:19px;background:#dcdcdc;"></div>
<div class="col" style="left:1202px;width:32px;color:#3a3a3a"><span class="nw">W</span></div>
<div class="a" style="left:1233px;top:195px;width:1px;height:19px;background:#dcdcdc;"></div>
<div class="col" style="left:1234px;width:32px;color:#3a3a3a"><span class="nw">X</span></div>
<div class="a" style="left:1265px;top:195px;width:1px;height:19px;background:#dcdcdc;"></div>
<div class="col" style="left:1266px;width:32px;color:#3a3a3a"><span class="nw">Y</span></div>
<div class="a" style="left:1297px;top:195px;width:1px;height:19px;background:#dcdcdc;"></div>
<div class="col" style="left:1298px;width:32px;color:#3a3a3a"><span class="nw">Z</span></div>
<div class="a" style="left:1329px;top:195px;width:1px;height:19px;background:#dcdcdc;"></div>
<div class="col" style="left:1330px;width:32px;color:#3a3a3a"><span class="nw2">AA</span></div>
<div class="a" style="left:1361px;top:195px;width:1px;height:19px;background:#dcdcdc;"></div>
<div class="col" style="left:1362px;width:32px;color:#3a3a3a"><span class="nw2">AB</span></div>
<div class="a" style="left:1393px;top:195px;width:1px;height:19px;background:#dcdcdc;"></div>
<div class="col" style="left:1394px;width:32px;color:#3a3a3a"><span class="nw2">AC</span></div>
<div class="a" style="left:1425px;top:195px;width:1px;height:19px;background:#dcdcdc;"></div>
<div class="col" style="left:1426px;width:32px;color:#3a3a3a"><span class="nw2">AD</span></div>
<div class="a" style="left:1457px;top:195px;width:1px;height:19px;background:#dcdcdc;"></div>
<div class="col" style="left:1458px;width:32px;color:#3a3a3a"><span class="nw2">AE</span></div>
<div class="a" style="left:1489px;top:195px;width:1px;height:19px;background:#dcdcdc;"></div>
<div class="col" style="left:1490px;width:32px;color:#3a3a3a"><span class="nw2">AF</span></div>
<div class="a" style="left:1521px;top:195px;width:1px;height:19px;background:#dcdcdc;"></div>
<div class="col" style="left:1522px;width:32px;color:#3a3a3a"><span class="nw2">AG</span></div>
<div class="a" style="left:1553px;top:195px;width:1px;height:19px;background:#dcdcdc;"></div>
<div class="col" style="left:1554px;width:32px;color:#3a3a3a"><span class="nw2">AH</span></div>
<div class="a" style="left:1585px;top:195px;width:1px;height:19px;background:#dcdcdc;"></div>
<div class="a" style="left:529px;top:195px;width:1px;height:19px;background:#dcdcdc;"></div>
<div class="row" style="top:214px;height:16px;line-height:15px;color:#3a3a3a"><span class="nw">1</span></div>
<div class="row" style="top:230px;height:32px;line-height:31px;color:#3a3a3a"><span class="nw">2</span></div>
<div class="row" style="top:262px;height:32px;line-height:31px;color:#3a3a3a"><span class="nw">3</span></div>
<div class="row" style="top:294px;height:32px;line-height:31px;color:#3a3a3a"><span class="nw">4</span></div>
<div class="row" style="top:326px;height:32px;line-height:31px;color:#3a3a3a"><span class="nw">5</span></div>
<div class="row" style="top:358px;height:32px;line-height:31px;color:#3a3a3a"><span class="nw">6</span></div>
<div class="row" style="top:390px;height:32px;line-height:31px;color:#3a3a3a"><span class="nw">7</span></div>
<div class="row" style="top:422px;height:32px;line-height:31px;color:#3a3a3a"><span class="nw">8</span></div>
<div class="row" style="top:454px;height:32px;line-height:31px;color:#3a3a3a"><span class="nw">9</span></div>
<div class="row" style="top:486px;height:32px;line-height:31px;color:#3a3a3a"><span class="nw">10</span></div>
<div class="row" style="top:518px;height:32px;line-height:31px;color:#cc44cc"><span class="nw">11</span></div>
<div class="row" style="top:550px;height:32px;line-height:31px;color:#3a3a3a"><span class="nw">12</span></div>
<div class="row" style="top:582px;height:32px;line-height:31px;color:#3a3a3a"><span class="nw">13</span></div>
<div class="row" style="top:614px;height:32px;line-height:31px;color:#3a3a3a"><span class="nw">14</span></div>
<div class="row" style="top:646px;height:32px;line-height:31px;color:#3a3a3a"><span class="nw">15</span></div>
<svg style="left:0;top:0" width="1920" height="700"><path d="M529.5 214 V686 M561.5 214 V686 M593.5 214 V686 M625.5 214 V686 M657.5 214 V686 M689.5 214 V686 M721.5 214 V686 M753.5 214 V686 M785.5 214 V686 M817.5 214 V686 M849.5 214 V686 M881.5 214 V686 M913.5 214 V686 M945.5 214 V686 M977.5 214 V686 M1009.5 214 V686 M1041.5 214 V686 M1057.5 214 V686 M1089.5 214 V686 M1105.5 214 V686 M1137.5 214 V686 M1169.5 214 V686 M1201.5 214 V686 M1233.5 214 V686 M1265.5 214 V686 M1297.5 214 V686 M1329.5 214 V686 M1361.5 214 V686 M1393.5 214 V686 M1425.5 214 V686 M1457.5 214 V686 M1489.5 214 V686 M1521.5 214 V686 M1553.5 214 V686 M1585.5 214 V686 M490 230.5 H1592 M490 262.5 H1592 M490 294.5 H1592 M490 326.5 H1592 M490 358.5 H1592 M490 390.5 H1592 M490 422.5 H1592 M490 454.5 H1592 M490 486.5 H1592 M490 518.5 H1592 M490 550.5 H1592 M490 582.5 H1592 M490 614.5 H1592 M490 646.5 H1592 M490 678.5 H1592" stroke="#dcdcdc" stroke-width="1" fill="none"/></svg>
<div class="a" style="left:561px;top:230px;width:481px;height:417px;background:#fff;border:2px solid #2c9fd9;"></div>
<div class="a" style="left:562px;top:212px;width:480px;height:2px;background:#2c9fd9;"></div>
<div class="a" style="left:528px;top:231px;width:2px;height:415px;background:#2c9fd9;"></div>
<div class="a" style="left:1038px;top:643px;width:5px;height:5px;background:#2c9fd9;border:1px solid #fff;"></div>
<div class="t " style="left:569px;top:232.5px;font-size:14px;height:16px;line-height:16px;color:#b9b9b9;letter-spacing:0.150px">请将合同文本粘贴于此处，然后点击右上角【提交审核】按钮 ...</div>
<div class="a" style="left:563px;top:231px;width:35.5px;height:20px;background:#0000ff;"></div>
<div class="t " style="left:565px;top:234.2px;font-size:12.5px;height:14.5px;line-height:14.5px;color:#fff;letter-spacing:0.35px">InCell</div>
<div class="a" style="left:1058.5px;top:231px;width:30.5px;height:222px;background:#1e90ff;border-radius:0 0 5px 5px"></div>
<div class="a" style="left:1058.5px;top:231px;width:30.5px;height:20px;background:#0000ff;overflow:hidden"><div class="t " style="left:2px;top:3.2px;font-size:12.5px;height:14.5px;line-height:14.5px;color:#fff;letter-spacing:0.35px">Submit</div></div>
<div class="t " style="left:873.5px;width:400px;text-align:center;top:306.0px;font-size:14px;height:16px;line-height:16px;color:#fff;">提</div>
<div class="t " style="left:873.5px;width:400px;text-align:center;top:325.2px;font-size:14px;height:16px;line-height:16px;color:#fff;">交</div>
<div class="t " style="left:873.5px;width:400px;text-align:center;top:344.4px;font-size:14px;height:16px;line-height:16px;color:#fff;">审</div>
<div class="t " style="left:873.5px;width:400px;text-align:center;top:363.6px;font-size:14px;height:16px;line-height:16px;color:#fff;">核</div>
<div class="a" style="left:1105px;top:230px;width:481px;height:416px;background:#fff;border:1px solid #d4d4d4;"></div>
<div class="a" style="left:1129px;top:236px;width:432px;height:225px;background:#fff;border:1px solid #f5f5f5;border-radius:4px;border-top:none"></div>
<div class="a" style="left:1129px;top:469px;width:432px;height:190px;background:#fff;border:1px solid #f5f5f5;border-radius:4px"></div>
<div class="a" style="left:1106px;top:647px;width:481px;height:39px;background:#fff;"></div>
<div class="a" style="left:1106px;top:231px;width:47.5px;height:20px;background:#0000ff;"></div>
<div class="t " style="left:1108.5px;top:234.2px;font-size:12.5px;height:14.5px;line-height:14.5px;color:#fff;letter-spacing:0.35px">OutCell</div>
<div class="a" style="left:1145.5px;top:267.5px;width:52px;height:20px;background:#5a4ff5;"></div>
<div class="t " style="left:971.5px;width:400px;text-align:center;top:270.8px;font-size:12.5px;height:14.5px;line-height:14.5px;color:#fff;">风险类型</div>
<div class="a" style="left:1145.5px;top:315.5px;width:52px;height:20px;background:#5a4ff5;"></div>
<div class="t " style="left:971.5px;width:400px;text-align:center;top:318.8px;font-size:12.5px;height:14.5px;line-height:14.5px;color:#fff;">风险描述</div>
<div class="a" style="left:1145.5px;top:501.5px;width:52px;height:20px;background:#5a4ff5;"></div>
<div class="t " style="left:971.5px;width:400px;text-align:center;top:504.8px;font-size:12.5px;height:14.5px;line-height:14.5px;color:#fff;">风险类型</div>
<div class="a" style="left:1145.5px;top:549.5px;width:52px;height:20px;background:#5a4ff5;"></div>
<div class="t " style="left:971.5px;width:400px;text-align:center;top:552.8px;font-size:12.5px;height:14.5px;line-height:14.5px;color:#fff;">风险描述</div>
<div class="t " style="left:1470px;top:403.1px;font-size:14.7px;height:16.7px;line-height:16.7px;color:#6fb0f2;text-decoration:underline">了解详情</div>
<div class="a" style="left:1470px;top:634px;width:70px;height:12px;overflow:hidden"><div class="t " style="left:0px;top:3.7px;font-size:14.7px;height:16.7px;line-height:16.7px;color:#6fb0f2;text-decoration:underline">了解详情</div></div>
<svg style="left:0;top:0" width="1920" height="700"><path d="M1105.5 647 V686 M1137.5 647 V686 M1169.5 647 V686 M1201.5 647 V686 M1233.5 647 V686 M1265.5 647 V686 M1297.5 647 V686 M1329.5 647 V686 M1361.5 647 V686 M1393.5 647 V686 M1425.5 647 V686 M1457.5 647 V686 M1489.5 647 V686 M1521.5 647 V686 M1553.5 647 V686 M1585.5 647 V686 M1105 646.500 H1592 M1105 678.500 H1592" stroke="#dcdcdc" stroke-width="1" fill="none"/></svg>
<div class="a" style="left:1593px;top:195px;width:17px;height:492px;background:#ececec;"></div>
<div class="a" style="left:1593px;top:196px;width:16px;height:4px;background:#fff;border:1px solid #cfcfcf;"></div>
<div class="a" style="left:1593px;top:201px;width:16px;height:18px;background:#fff;border:1px solid #cfcfcf;"></div>
<svg style="left:1597px;top:207px" width="8" height="5" viewBox="0 0 8 5"><path d="M0 4.500 l4 -4 l4 4 z" fill="#111"/></svg>
<div class="a" style="left:1593px;top:220px;width:16px;height:232px;background:#fff;border:1px solid #cfcfcf;"></div>
<div class="a" style="left:1593px;top:670px;width:16px;height:17px;background:#fff;border:1px solid #cfcfcf;"></div>
<svg style="left:1597px;top:676px" width="8" height="5" viewBox="0 0 8 5"><path d="M0 0.500 l4 4 l4 -4 z" fill="#111"/></svg>
<div class="a" style="left:490px;top:687px;width:1102px;height:28px;background:#f6f6f6;"></div>
<div class="a" style="left:490px;top:687px;width:1102px;height:1px;background:#cfcfcf;"></div>
<svg style="left:514px;top:696px" width="36" height="10" viewBox="0 0 36 10"><path d="M6.500 1 v8 l-4.500 -4 z M27.500 1 v8 l4.500 -4 z" fill="#c8c8c8"/></svg>
<div class="a" style="left:570px;top:690px;width:2px;height:22px;background:#d4d4d4;"></div>
<svg style="left:591px;top:695.5px" width="11" height="11" viewBox="0 0 11 11"><rect x="0.500" y="0.500" width="10" height="10" fill="#eaf0ff" stroke="#5b7fe0"/><rect x="0.500" y="0.500" width="10" height="2.500" fill="#5b7fe0"/><path d="M2.500 5.500h6M2.500 8h6" stroke="#5b7fe0" stroke-width="0.900"/></svg>
<div class="t " style="left:605px;top:694.8px;font-size:12.5px;height:14.5px;line-height:14.5px;color:#444;letter-spacing:0.45px">show-text</div>
<div class="a" style="left:678px;top:687px;width:120px;height:28px;background:#fff;border:1px solid #d4d4d4;border-top:none;border-bottom:none"></div>
<div class="a" style="left:679px;top:710.5px;width:118px;height:2px;background:#2c9fd9;"></div>
<svg style="left:697px;top:695.5px" width="11" height="11" viewBox="0 0 11 11"><rect x="0.500" y="0.500" width="10" height="10" fill="#eaf0ff" stroke="#5b7fe0"/><rect x="0.500" y="0.500" width="10" height="2.500" fill="#5b7fe0"/><path d="M2.500 5.500h6M2.500 8h6" stroke="#5b7fe0" stroke-width="0.900"/></svg>
<div class="t " style="left:711px;top:695.5px;font-size:12px;height:14px;line-height:14px;color:#2a8fd6;font-weight:bold">销售合同审核</div>
<svg style="left:816px;top:695.5px" width="11" height="11" viewBox="0 0 11 11"><rect x="0.500" y="0.500" width="10" height="10" fill="#eaf0ff" stroke="#5b7fe0"/><rect x="0.500" y="0.500" width="10" height="2.500" fill="#5b7fe0"/><path d="M2.500 5.500h6M2.500 8h6" stroke="#5b7fe0" stroke-width="0.900"/></svg>
<div class="t " style="left:830px;top:695.5px;font-size:12px;height:14px;line-height:14px;color:#444;">知识问答</div>
<div class="a" style="left:892px;top:690px;width:1px;height:22px;background:#d4d4d4;"></div>
<svg style="left:911px;top:695.5px" width="11" height="11" viewBox="0 0 11 11"><rect x="0.500" y="0.500" width="10" height="10" fill="#eaf0ff" stroke="#7a8ab8"/><rect x="0.500" y="0.500" width="10" height="2.500" fill="#7a8ab8"/><rect x="2" y="4.500" width="3.500" height="4.500" fill="#f08030"/><rect x="6.500" y="4.500" width="2.500" height="4.500" fill="#5b7fe0"/></svg>
<div class="t " style="left:925px;top:695.5px;font-size:12px;height:14px;line-height:14px;color:#444;">AI用-对话框组件</div>
<div class="a" style="left:1028px;top:690px;width:1px;height:22px;background:#d4d4d4;"></div>
<div class="a" style="left:1036px;top:688px;width:5px;height:25px;background:#f8f8f8;border:1px solid #d4d4d4;"></div>
<div class="a" style="left:1043px;top:687px;width:549px;height:27px;background:#ececec;"></div>
<div class="a" style="left:1044px;top:694px;width:15px;height:16px;background:#fff;border:1px solid #cfcfcf;"></div>
<svg style="left:1049px;top:698px" width="5" height="8" viewBox="0 0 5 8"><path d="M4.500 0 v8 l-4 -4 z" fill="#111"/></svg>
<div class="a" style="left:1060px;top:694px;width:244px;height:15px;background:#fff;border:1px solid #cfcfcf;"></div>
<div class="a" style="left:1570px;top:694px;width:15px;height:16px;background:#fff;border:1px solid #cfcfcf;"></div>
<svg style="left:1575px;top:698px" width="5" height="8" viewBox="0 0 5 8"><path d="M0.500 0 v8 l4 -4 z" fill="#111"/></svg>
<div class="a" style="left:1588px;top:688px;width:5px;height:26px;background:#fff;border:1px solid #cfcfcf;"></div>
<div class="a" style="left:1593px;top:687px;width:17px;height:28px;background:#fff;"></div>
<div class="a" style="left:490px;top:714px;width:1120px;height:1px;background:#cfcfcf;"></div>
<div class="a" style="left:1617px;top:197px;width:303px;height:520px;background:#efefef;"></div>
<div class="t " style="left:1625px;top:165.0px;font-size:15px;height:17px;line-height:17px;color:#1a1a1a;">单元格设置</div>
<svg style="left:1889px;top:167px" width="10" height="15" viewBox="0 0 10 15"><path d="M2.500 1 h5 v1 l-1 0.800 v3.200 l2 2 v1 h-7 v-1 l2 -2 v-3.200 l-1 -0.800 z" fill="#666e7e"/><path d="M5 9 v5" stroke="#666e7e" stroke-width="1.200"/></svg>
<div class="a" style="left:1617px;top:199px;width:284px;height:497px;background:#fafafa;"></div>
<div class="a" style="left:1901px;top:199px;width:16px;height:497px;background:#e9e9e9;"></div>
<div class="a" style="left:1901px;top:200px;width:16px;height:17px;background:#fff;border:1px solid #cfcfcf;"></div>
<svg style="left:1905px;top:206px" width="8" height="5" viewBox="0 0 8 5"><path d="M0 4.500 l4 -4 l4 4 z" fill="#111"/></svg>
<div class="a" style="left:1901px;top:218px;width:16px;height:387px;background:#fff;border:1px solid #cfcfcf;"></div>
<div class="a" style="left:1901px;top:679px;width:16px;height:17px;background:#fff;border:1px solid #cfcfcf;"></div>
<svg style="left:1905px;top:685px" width="8" height="5" viewBox="0 0 8 5"><path d="M0 0.500 l4 4 l4 -4 z" fill="#111"/></svg>
<svg style="left:1627px;top:219px" width="16" height="15" viewBox="0 0 16 15"><rect x="0.500" y="1" width="15" height="12.500" fill="#eef3ff" stroke="#7f9ee8"/><text x="5.500" y="11.500" font-size="10" font-weight="bold" fill="#333" font-family="Liberation Serif,serif">T</text><path d="M2.500 4.500h3M2.500 7h3M2.500 9.500h3" stroke="#777" stroke-width="0.800"/></svg>
<div class="t " style="left:1647px;top:218.5px;font-size:14px;height:16px;line-height:16px;color:#1a1a1a;">多行输入框</div>
<div class="a" style="left:1628px;top:248px;width:262px;height:1px;background:#ebebeb;"></div>
<div class="t " style="left:1632px;top:263.5px;font-size:14px;height:16px;line-height:16px;color:#1a1a1a;"><span style="letter-spacing:0.4px">CSS</span>类名</div>
<svg style="left:1696px;top:264px" width="16" height="16" viewBox="0 0 16 16"><circle cx="8" cy="8" r="8.2" fill="#1a9be6"/><text x="8" y="12" text-anchor="middle" font-size="11.500" font-weight="bold" fill="#fff" font-family="Liberation Sans,sans-serif">?</text></svg>
<div class="a" style="left:1641px;top:287px;width:249px;height:24px;background:#fff;border:1px solid #e0e0e0;"></div>
<div class="t " style="left:1632px;top:329.0px;font-size:14px;height:16px;line-height:16px;color:#1f6fc8;text-decoration:underline">编辑命令<span style="letter-spacing:1.5px">...</span></div>
<svg style="left:1709.5px;top:327.5px" width="16" height="16" viewBox="0 0 16 16"><circle cx="8" cy="8" r="8.2" fill="#1a9be6"/><text x="8" y="12" text-anchor="middle" font-size="11.500" font-weight="bold" fill="#fff" font-family="Liberation Sans,sans-serif">?</text></svg>
<div class="t " style="left:1632px;top:364.5px;font-size:14px;height:16px;line-height:16px;color:#1457b8;text-decoration:underline;font-weight:bold">数据验证<span style="letter-spacing:1.2px">...</span></div>
<svg style="left:1709.5px;top:362.5px" width="16" height="16" viewBox="0 0 16 16"><circle cx="8" cy="8" r="8.2" fill="#1a9be6"/><text x="8" y="12" text-anchor="middle" font-size="11.500" font-weight="bold" fill="#fff" font-family="Liberation Sans,sans-serif">?</text></svg>
<div class="t " style="left:1632px;top:399.5px;font-size:14px;height:16px;line-height:16px;color:#1f6fc8;text-decoration:underline">单元格权限<span style="letter-spacing:1.5px">...</span></div>
<div class="t " style="left:1632px;top:438.5px;font-size:14px;height:16px;line-height:16px;color:#1a1a1a;">缺省值</div>
<div class="a" style="left:1641px;top:462px;width:229px;height:22px;background:#fff;border:1px solid #b4b4b4;"></div>
<div class="a" style="left:1869px;top:462px;width:21px;height:22px;background:#d9d9d9;border:1px solid #a9a9a9;"></div><svg style="left:1872px;top:465px" width="15" height="16" viewBox="0 0 15 16"><rect x="0.500" y="0.500" width="14" height="14" fill="#fff" stroke="#b0b8d0" stroke-width="0.800"/><path d="M0.500 4h14M0.500 7.500h14M0.500 11h14M5 0.500v14M10 0.500v14" stroke="#c5cde0" stroke-width="0.800"/><rect x="0.500" y="0.500" width="5" height="3" fill="#3f6fd0"/><path d="M5 4 l6.500 6.500 M11.500 10.500 l-4 -1 M11.500 10.500 l-1 -4" stroke="#e8502a" stroke-width="1.700" fill="none"/></svg>
<div class="t " style="left:1632px;top:506.5px;font-size:14px;height:16px;line-height:16px;color:#1a1a1a;">水印</div>
<div class="a" style="left:1641px;top:529px;width:226px;height:22px;background:#fff;border:1px solid #b4b4b4;overflow:hidden;border-right:none"><div class="t " style="left:6px;top:3.5px;font-size:12px;height:14px;line-height:14px;color:#222;">请将合同文本粘贴于此处，然后点击右上角【提交审核】按钮</div></div>
<div class="a" style="left:1869px;top:529px;width:21px;height:22px;background:#d9d9d9;border:1px solid #a9a9a9;"></div><svg style="left:1872px;top:532px" width="15" height="16" viewBox="0 0 15 16"><rect x="0.500" y="0.500" width="14" height="14" fill="#fff" stroke="#b0b8d0" stroke-width="0.800"/><path d="M0.500 4h14M0.500 7.500h14M0.500 11h14M5 0.500v14M10 0.500v14" stroke="#c5cde0" stroke-width="0.800"/><rect x="0.500" y="0.500" width="5" height="3" fill="#3f6fd0"/><path d="M5 4 l6.500 6.500 M11.500 10.500 l-4 -1 M11.500 10.500 l-1 -4" stroke="#e8502a" stroke-width="1.700" fill="none"/></svg>
<div class="t " style="left:1632px;top:573.0px;font-size:14px;height:16px;line-height:16px;color:#1a1a1a;">其他</div>
<div class="a" style="left:1641px;top:603px;width:12px;height:12px;background:#fff;border:1px solid #c4c4c4;"></div>
<div class="t " style="left:1657px;top:602.5px;font-size:12px;height:14px;line-height:14px;color:#1a1a1a;">只读</div>
<div class="a" style="left:1641px;top:635px;width:12px;height:12px;background:#fff;border:1px solid #c4c4c4;"></div>
<div class="t " style="left:1657px;top:634.5px;font-size:12px;height:14px;line-height:14px;color:#1a1a1a;">获得焦点时全选文本内容</div>
<div class="a" style="left:1641px;top:666px;width:12px;height:12px;background:#fff;border:1px solid #c4c4c4;"></div>
<svg style="left:1642px;top:667px" width="10" height="10" viewBox="0 0 10 10"><path d="M2 5 l2.500 2.800 l4 -6.500" stroke="#8a8a8a" stroke-width="1.300" fill="none"/></svg>
<div class="t " style="left:1657px;top:665.5px;font-size:12px;height:14px;line-height:14px;color:#1a1a1a;">输入时按回车换行</div>
<svg style="left:1758px;top:664px" width="16" height="16" viewBox="0 0 16 16"><circle cx="8" cy="8" r="8.2" fill="#1a9be6"/><text x="8" y="12" text-anchor="middle" font-size="11.500" font-weight="bold" fill="#fff" font-family="Liberation Sans,sans-serif">?</text></svg>
<div class="a" style="left:1690px;top:696px;width:79px;height:21px;background:#fafafa;"></div>
<div class="t " style="left:1632px;top:699.5px;font-size:12px;height:14px;line-height:14px;color:#1a1a1a;">数据绑定</div>
<div class="t " style="left:1698px;top:699.5px;font-size:12px;height:14px;line-height:14px;color:#1a1a1a;">单元格设置</div>
<div class="t " style="left:1776px;top:699.5px;font-size:12px;height:14px;line-height:14px;color:#1a1a1a;">页面设置</div>
<div class="a" style="left:323px;top:717px;width:1597px;height:290px;background:#e8e8e8;"></div>
<div class="a" style="left:326px;top:745px;width:1590px;height:260px;background:#fff;border:1px solid #d0d0d0;"></div>
<div class="a" style="left:326px;top:723px;width:94px;height:23px;background:#fff;border:1px solid #d0d0d0;border-bottom:none"></div>
<div class="t " style="left:338px;top:728.5px;font-size:12px;height:14px;line-height:14px;color:#1a1a1a;">查找结果</div>
<svg style="left:394px;top:729px" width="11" height="11" viewBox="0 0 11 11"><path d="M1 1 l9 9 M10 1 l-9 9" stroke="#777" stroke-width="1.200"/></svg>
<div class="t " style="left:336px;top:760.2px;font-size:12.5px;height:14.5px;line-height:14.5px;color:#222;">show-evidence, 共找到 0 个引用</div>
<div class="a" style="left:329px;top:784px;width:1585px;height:220px;background:#fff;border:1px solid #cfcfcf;"></div>
<div class="a" style="left:1574px;top:753px;width:300px;height:26px;background:#fff;border:1px solid #dcdcdc;"></div>
<div class="t " style="left:1580px;top:760.5px;font-size:12px;height:14px;line-height:14px;color:#9a9a9a;">请输入搜索关键字</div>
<svg style="left:1856px;top:758px" width="16" height="16" viewBox="0 0 16 16"><circle cx="6.500" cy="6.500" r="4.800" fill="none" stroke="#aaa" stroke-width="1.300"/><path d="M10 10 l4.500 4.500" stroke="#aaa" stroke-width="1.600"/></svg>
<svg style="left:1896px;top:757px" width="17" height="18" viewBox="0 0 17 18"><path d="M1.500 14 v-12.500 h9.500" stroke="#666" stroke-width="1.300" fill="none"/><path d="M4.500 4.500 h7 l3.500 3.500 v9 h-10.500 z" stroke="#666" stroke-width="1.300" fill="#fff"/></svg>
<div class="t " style="left:1582px;top:978.0px;font-size:24px;height:26px;line-height:26px;color:#fff;text-shadow:1px 1px 1.5px #222,0 0 2px #777,1px 1px 0 #666;letter-spacing:0.600px">掘金技术社区 @ 大模型开发</div>
</body></html>
